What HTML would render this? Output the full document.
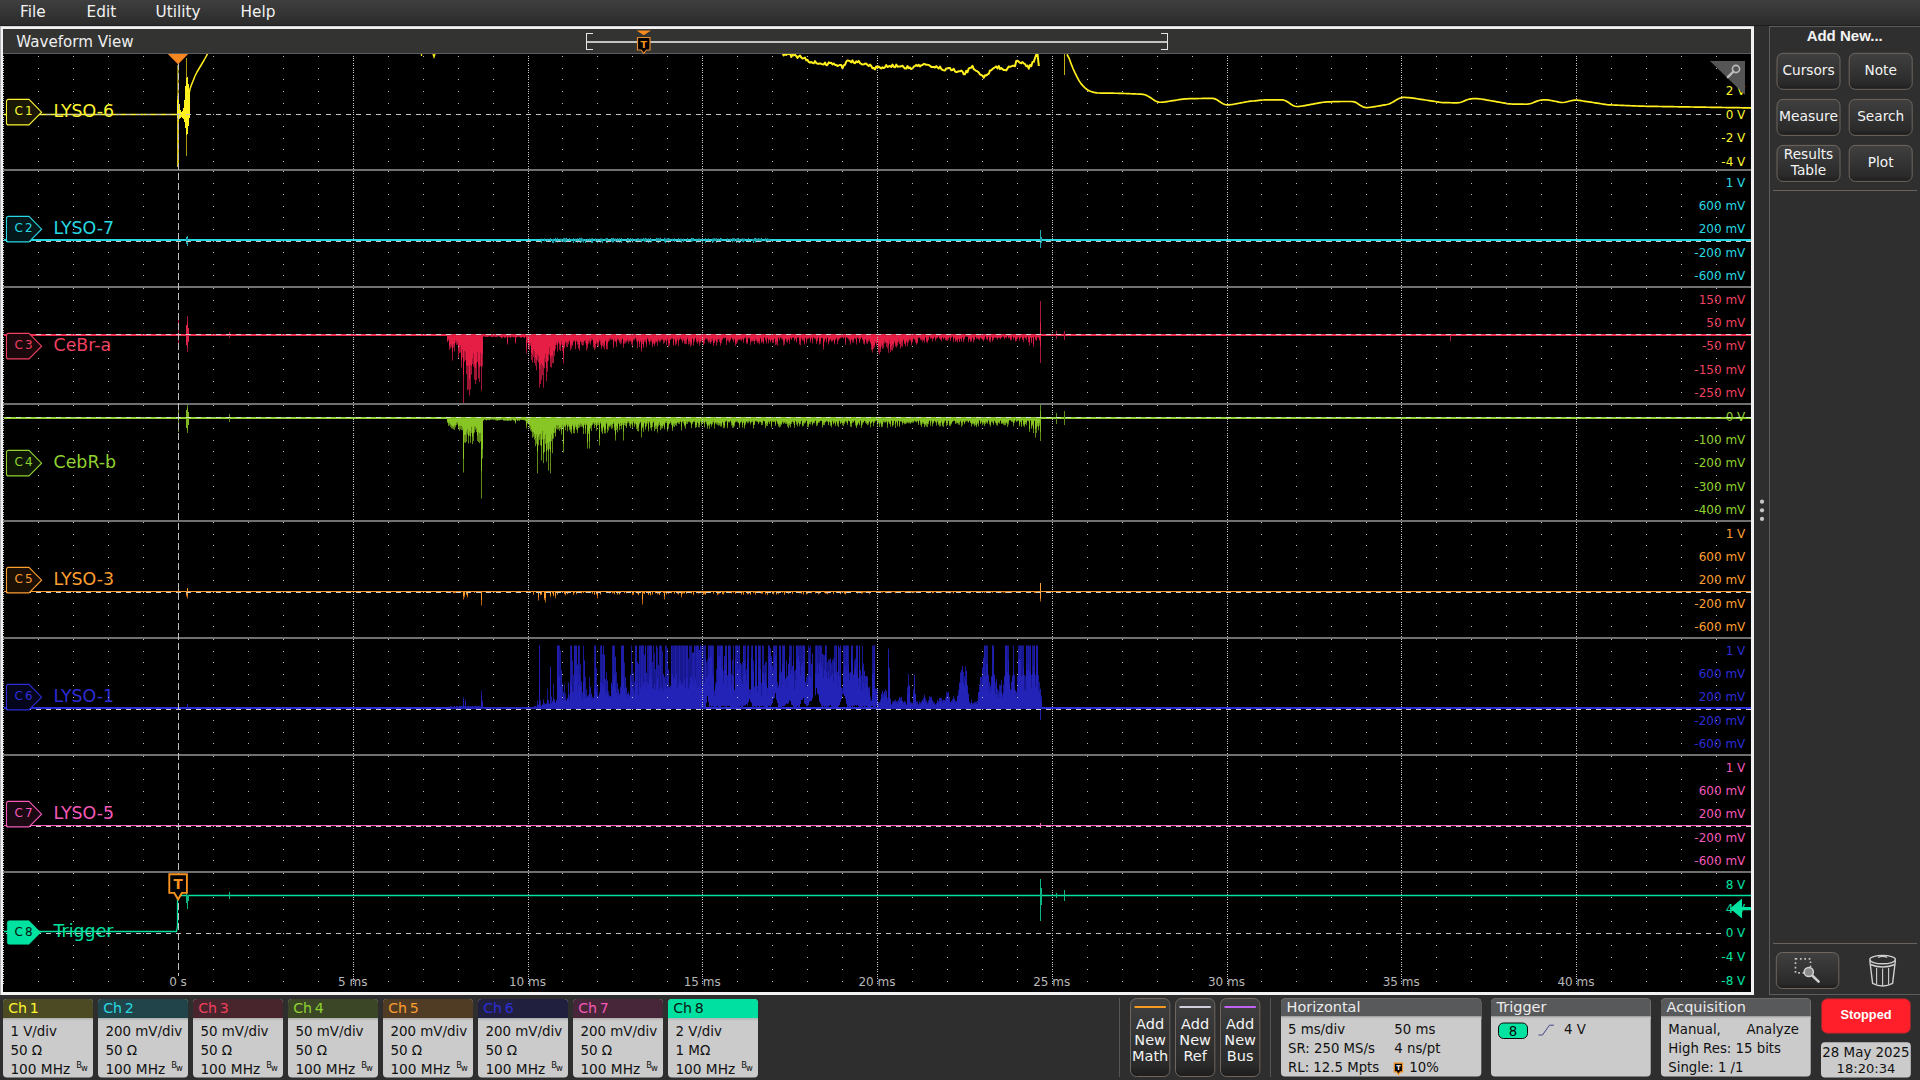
<!DOCTYPE html>
<html lang="en"><head><meta charset="utf-8"><title>Waveform View</title>
<style>html,body{margin:0;padding:0;background:#2e2e2e;overflow:hidden}svg{display:block}text{font-family:'DejaVu Sans','Liberation Sans',sans-serif;white-space:pre}</style>
</head><body>
<svg width="1920" height="1080" viewBox="0 0 1920 1080">
<defs>
<linearGradient id="gm" x1="0" y1="0" x2="0" y2="1"><stop offset="0" stop-color="#3f3f3f"/><stop offset="1" stop-color="#2b2b2b"/></linearGradient>
<linearGradient id="gb" x1="0" y1="0" x2="0" y2="1"><stop offset="0" stop-color="#404040"/><stop offset="0.85" stop-color="#2a2a2a"/><stop offset="1" stop-color="#1c1c1c"/></linearGradient>
<linearGradient id="gh" x1="0" y1="0" x2="0" y2="1"><stop offset="0" stop-color="#b4b4b4"/><stop offset="1" stop-color="#cbcbcb"/></linearGradient>
<path id="dr" d="M38 .5h1m34 0h1m34 0h1m34 0h1m69 0h1m34 0h1m34 0h1m34 0h1m69 0h1m34 0h1m34 0h1m34 0h1m68 0h1m34 0h1m34 0h1m34 0h1m69 0h1m34 0h1m34 0h1m34 0h1m69 0h1m34 0h1m34 0h1m34 0h1m69 0h1m34 0h1m34 0h1m34 0h1m68 0h1m34 0h1m34 0h1m34 0h1m69 0h1m34 0h1m34 0h1m34 0h1m69 0h1m34 0h1m34 0h1m34 0h1" stroke="#b9b9b9" stroke-width="1" fill="none" shape-rendering="crispEdges"/>
<clipPath id="cg"><rect x="3" y="54" width="1748" height="938"/></clipPath>
</defs>
<rect width="1920" height="1080" fill="#2e2e2e"/>
<rect width="1920" height="25" fill="url(#gm)"/>
<rect y="25" width="1920" height="1" fill="#1e1e1e"/>
<text x="20" y="16.7" font-size="15.3" fill="#f2f2f2">File</text>
<text x="86.5" y="16.7" font-size="15.3" fill="#f2f2f2">Edit</text>
<text x="155.5" y="16.7" font-size="15.3" fill="#f2f2f2">Utility</text>
<text x="240.5" y="16.7" font-size="15.3" fill="#f2f2f2">Help</text>
<rect x="0" y="26" width="1754" height="969" fill="#f2f2f2"/>
<rect x="0" y="26" width="1754" height="1" fill="#d4d4d8"/>
<rect x="0" y="26" width="1" height="969" fill="#b4b5ba"/>
<rect x="3" y="29" width="1748" height="963" fill="#000"/>
<rect x="3" y="29" width="1748" height="24" fill="#333332"/>
<rect x="3" y="53" width="1748" height="1" fill="#5c5d60"/>
<text x="16.3" y="46.8" font-size="15.1" fill="#eeeeee">Waveform View</text>
<g fill="none" stroke="#e4e4e4" stroke-width="1" shape-rendering="crispEdges">
<path d="M593 33.5H586.5V49.5H593"/><path d="M1161 33.5H1167.5V49.5H1161"/>
</g>
<rect x="587" y="41" width="580" height="2" fill="#c2c2c2"/>
<path d="M636.5 30.5h14.5l-7.25 4.8z" fill="#f6891f"/>
<path d="M637.5 37.5h12.5v12.5h-3.6l-2.65 3.6l-2.65-3.6h-3.6z" fill="#000" stroke="#e8892b" stroke-width="1.2"/>
<text x="643.75" y="47.6" font-size="9.5" fill="#f6921f" text-anchor="middle" font-weight="bold">T</text>
<g clip-path="url(#cg)">
<rect x="4" y="825" width="1747" height="1" fill="#f458b8"/>
<path d="M1040.5 823V828" stroke="#f458b8" stroke-width="1" fill="none"/>
<rect x="4" y="239" width="1747" height="2" fill="#27d8e2"/>
<path d="M541.5 238.44V243.08M544.5 238.44V241.54M547.5 238.74V241.61M550.5 238.04V241.31M552.5 239V242.92M553.5 238.74V243.16M555.5 237.85V242.19M557.5 237.87V242.52M560.5 238.57V241.37M561.5 238.92V241.66M563.5 238.19V241.74M564.5 238.02V242.06M565.5 238.42V242.55M566.5 237.83V241.05M569.5 238.05V241.81M571.5 238.94V241.4M573.5 238.09V243.05M575.5 238.57V242.15M577.5 238.1V242.75M579.5 237.87V241.2M580.5 238.27V243.02M581.5 237.89V242.2M582.5 238.62V241.39M583.5 238.82V242.52M585.5 238.94V243.17M587.5 238.72V242.31M589.5 238.49V241.12M591.5 238.41V242.84M592.5 238.12V243.09M595.5 238.48V241.33M597.5 238.46V243.2M600.5 238.41V242.6M601.5 238.65V241.89M602.5 238.55V243.17M605.5 238.59V241.2M606.5 238.06V242.91M607.5 238.06V242.7M611.5 238.15V241.62M612.5 238.08V242.52M613.5 237.87V242.43M615.5 238.34V241.55M617.5 238.02V242.42M619.5 238.23V242.62M621.5 237.99V242.91M627.5 238V243.06M628.5 238.17V242.58M630.5 238.06V242.28M632.5 238.25V242.7M635.5 238.81V241.97M637.5 238.18V242.39M638.5 238.43V241.5M639.5 238.84V241.7M640.5 238.77V241.08M641.5 238.54V242.35M643.5 237.92V241M644.5 238.67V241.9M645.5 238V241.82M646.5 238.26V241.21M648.5 238.3V243.11M650.5 238.02V242.41M651.5 238.83V242.31M656.5 237.93V241M657.5 238.32V242.35M658.5 238.24V242.96M659.5 238.48V241.5M660.5 237.83V241.84M664.5 237.82V242.09M665.5 238.62V243.17M666.5 238.66V242.05M667.5 238.25V241.98M668.5 238.06V242.82M669.5 238.36V241.6M672.5 238.68V241.34M674.5 238.27V242.04M678.5 238.09V241.66M680.5 238.64V242.17M681.5 238.57V242.64M683.5 238.7V242M687.5 238.07V241.94M691.5 237.91V241.85M692.5 237.98V241.43M693.5 238V241.15M696.5 238.66V242.72M698.5 238.43V242.21M699.5 238.6V241.34M702.5 238.72V242.8M705.5 238.13V243.15M708.5 237.99V241.48M712.5 238.65V243.02M713.5 238.27V241.91M714.5 238.25V241.1M715.5 238.54V241.16M716.5 238.31V242.63M718.5 238.48V241.69M720.5 237.87V241.82M721.5 238.16V241.33M727.5 238.34V241.56M730.5 238.72V241.82M732.5 238.14V242.44M733.5 238.2V241.2M734.5 238.29V241.52M736.5 238.61V242.75M737.5 238.13V241.12M738.5 237.86V242.5M739.5 238.86V243.14M742.5 238.25V241.78M743.5 238.6V242.35M744.5 238.54V241.3M748.5 237.98V242.14M752.5 238.88V241.07M753.5 238.95V242.96M754.5 238.09V241M755.5 237.93V242.36M756.5 238.44V241.22M757.5 238.81V241.82M758.5 237.94V241.33M759.5 238.67V241.36M760.5 238.72V242.06M761.5 237.89V241.81M765.5 237.87V241.26M767.5 238.19V242.6M768.5 238.76V241.05M769.5 238.91V241.88M178.5 236V247M187.5 236V246M186.5 237V244M1040.5 230V248M1041.5 237V243" stroke="#1fa9b4" stroke-width="1" fill="none"/>
<rect x="4" y="591" width="1747" height="1" fill="#fd9e30"/>
<path d="M448.5 591.5V592.37M449.5 591.5V593.03M450.5 591.5V592.27M453.5 591.5V593.46M454.5 591.5V593.11M455.5 591.5V592.73M457.5 591.5V592.09M461.5 591.5V592.28M462.5 591.5V592.05M463.5 591.5V599.5M464.5 591.5V597.35M466.5 591.5V595.11M467.5 591.5V597.5M471.5 591.5V592.01M474.5 591.5V592.85M476.5 591.5V592.57M477.5 591.5V592.11M478.5 591.5V593.1M479.5 591.5V592.13M480.5 591.5V592.08M482.5 591.5V592.05M483.5 591.5V591.86M485.5 591.5V592.28M490.5 591.5V592.34M494.5 591.5V592.33M496.5 591.5V592.22M497.5 591.5V592.29M499.5 591.5V592.38M501.5 591.5V592.02M505.5 591.5V592.1M507.5 591.5V592.45M508.5 591.5V591.94M510.5 591.5V592.03M515.5 591.5V592.34M516.5 591.5V592.48M520.5 591.5V591.87M521.5 591.5V592.13M523.5 591.5V591.96M528.5 591.5V591.82M530.5 591.5V591.84M533.5 591.5V594.79M538.5 591.5V600.5M540.5 591.5V595.38M541.5 591.5V595.03M544.5 591.5V600.14M550.5 591.5V596.77M552.5 591.5V593.7M553.5 591.5V596.33M555.5 591.5V598.23M557.5 591.5V594.64M564.5 591.5V593.86M565.5 591.5V595.41M566.5 591.5V592.5M567.5 591.5V594.3M570.5 591.5V592.71M573.5 591.5V595.1M574.5 591.5V593.12M576.5 591.5V594.23M577.5 591.5V592.61M581.5 591.5V593.58M583.5 591.5V593.15M585.5 591.5V592.55M588.5 591.5V592.91M592.5 591.5V593.76M594.5 591.5V594.97M596.5 591.5V594.44M598.5 591.5V592.92M599.5 591.5V592.81M600.5 591.5V594.65M608.5 591.5V592.7M609.5 591.5V593.42M612.5 591.5V593.51M613.5 591.5V592.73M614.5 591.5V594.4M617.5 591.5V594.66M618.5 591.5V592.73M619.5 591.5V594.58M620.5 591.5V593.18M624.5 591.5V593.31M626.5 591.5V593.56M628.5 591.5V593.13M632.5 591.5V595.26M633.5 591.5V594.83M635.5 591.5V592.52M637.5 591.5V593.86M638.5 591.5V595.41M640.5 591.5V593.15M643.5 591.5V593.48M644.5 591.5V594.1M647.5 591.5V592.53M648.5 591.5V595.05M650.5 591.5V595.5M652.5 591.5V594.73M655.5 591.5V593.56M657.5 591.5V594.34M658.5 591.5V593.67M659.5 591.5V595.13M660.5 591.5V592.52M663.5 591.5V593.03M665.5 591.5V592.9M666.5 591.5V594.64M668.5 591.5V593.86M670.5 591.5V592.71M671.5 591.5V593.41M674.5 591.5V594.02M677.5 591.5V593.75M678.5 591.5V594.7M682.5 591.5V593.81M683.5 591.5V593.34M684.5 591.5V593.65M686.5 591.5V593.9M690.5 591.5V592.85M691.5 591.5V593.65M693.5 591.5V595.23M696.5 591.5V593.35M698.5 591.5V593.66M699.5 591.5V593.33M701.5 591.5V593.14M703.5 591.5V594.88M704.5 591.5V594.2M705.5 591.5V595.03M707.5 591.5V592.76M710.5 591.5V592.55M713.5 591.5V594.04M717.5 591.5V595.22M718.5 591.5V594.33M719.5 591.5V593.62M722.5 591.5V594.18M723.5 591.5V594.53M724.5 591.5V592.47M728.5 591.5V592.92M730.5 591.5V592.61M731.5 591.5V593.48M733.5 591.5V592.72M735.5 591.5V593.91M736.5 591.5V593.03M741.5 591.5V594.55M742.5 591.5V592.63M743.5 591.5V594.88M747.5 591.5V594.47M748.5 591.5V594.04M750.5 591.5V595.11M753.5 591.5V593.37M754.5 591.5V592.52M755.5 591.5V594.75M756.5 591.5V592.77M760.5 591.5V593.37M761.5 591.5V593.79M762.5 591.5V593.63M765.5 591.5V594.38M767.5 591.5V595.06M768.5 591.5V592.97M770.5 591.5V592.81M772.5 591.5V593.95M773.5 591.5V594.48M774.5 591.5V592.47M776.5 591.5V594.79M778.5 591.5V594.25M782.5 591.5V592.77M784.5 591.5V595M785.5 591.5V592.52M788.5 591.5V594.07M790.5 591.5V593.12M792.5 591.5V594.24M798.5 591.5V593.04M799.5 591.5V593.26M801.5 591.5V593.89M803.5 591.5V594.72M806.5 591.5V594.39M807.5 591.5V594.08M811.5 591.5V593.42M815.5 591.5V593.51M816.5 591.5V592.7M818.5 591.5V594.31M819.5 591.5V593.79M820.5 591.5V592.33M824.5 591.5V592.91M825.5 591.5V593.63M826.5 591.5V593.87M827.5 591.5V594.29M828.5 591.5V592.33M829.5 591.5V593.26M833.5 591.5V594.14M840.5 591.5V594.35M841.5 591.5V592.38M842.5 591.5V593.01M843.5 591.5V592.29M844.5 591.5V593.91M845.5 591.5V594.52M847.5 591.5V593.07M848.5 591.5V592.31M857.5 591.5V593.67M860.5 591.5V592.58M861.5 591.5V593.71M862.5 591.5V593.34M863.5 591.5V592.4M864.5 591.5V592.48M865.5 591.5V592.49M866.5 591.5V592.26M869.5 591.5V594.3M870.5 591.5V592.26M879.5 591.5V592.54M881.5 591.5V592.35M882.5 591.5V592.71M885.5 591.5V593.03M886.5 591.5V593.25M887.5 591.5V592.94M889.5 591.5V592.88M891.5 591.5V592.67M892.5 591.5V592.16M893.5 591.5V592.06M894.5 591.5V592.34M895.5 591.5V593.38M896.5 591.5V592.42M897.5 591.5V592.41M900.5 591.5V593.26M904.5 591.5V592.25M905.5 591.5V593.19M906.5 591.5V592.66M911.5 591.5V592.54M912.5 591.5V593.28M913.5 591.5V592.82M914.5 591.5V592.57M915.5 591.5V592.1M917.5 591.5V592.07M918.5 591.5V592.91M920.5 591.5V592.4M926.5 591.5V592.61M928.5 591.5V593.3M932.5 591.5V593.25M933.5 591.5V593.06M935.5 591.5V592.18M937.5 591.5V592.29M938.5 591.5V592.83M939.5 591.5V592.03M941.5 591.5V592.65M945.5 591.5V592.41M946.5 591.5V593.38M948.5 591.5V592.69M949.5 591.5V593.48M950.5 591.5V592.58M951.5 591.5V592.21M952.5 591.5V592.28M953.5 591.5V593.49M957.5 591.5V592.18M958.5 591.5V592.19M960.5 591.5V592.36M966.5 591.5V592.77M967.5 591.5V592.3M968.5 591.5V592.07M969.5 591.5V593.42M973.5 591.5V592.49M977.5 591.5V592.15M979.5 591.5V592M980.5 591.5V592.22M982.5 591.5V593.03M984.5 591.5V592.8M990.5 591.5V592.2M992.5 591.5V593.05M996.5 591.5V592.75M998.5 591.5V592.32M1001.5 591.5V592.57M1002.5 591.5V592.1M1003.5 591.5V592.65M1004.5 591.5V592.31M1005.5 591.5V593.34M1006.5 591.5V592.97M1007.5 591.5V592.26M1009.5 591.5V592.29M1011.5 591.5V592.92M1017.5 591.5V592.66M1018.5 591.5V592.95M1026.5 591.5V592.84M1027.5 591.5V593.07M1034.5 591.5V592.76M1035.5 591.5V593M1036.5 591.5V593.11M1040.5 591.5V601.5M481.5 591.5V605.5M545.5 591.5V602.5M597.5 591.5V598.5M642.5 591.5V604.5M664.5 591.5V599.5M681.5 591.5V597.5M178.5 591.5V597.5M187.5 591.5V598.5M186.5 591.5V596.5" stroke="#b8650f" stroke-width="1" fill="none"/>
<path d="M448.5 591.5V592.08M449.5 591.5V592.62M450.5 591.5V592.05M453.5 591.5V592.58M454.5 591.5V592.55M455.5 591.5V592.48M457.5 591.5V591.83M461.5 591.5V591.94M462.5 591.5V591.84M463.5 591.5V596M464.5 591.5V594.98M466.5 591.5V593.56M467.5 591.5V595.61M471.5 591.5V591.85M474.5 591.5V592.49M476.5 591.5V592.31M477.5 591.5V591.88M478.5 591.5V592.71M479.5 591.5V591.86M480.5 591.5V591.88M482.5 591.5V591.9M485.5 591.5V592.04M490.5 591.5V592.1M494.5 591.5V592.04M496.5 591.5V591.95M497.5 591.5V592.05M499.5 591.5V592.19M501.5 591.5V591.83M505.5 591.5V591.86M507.5 591.5V592.21M508.5 591.5V591.84M510.5 591.5V591.89M515.5 591.5V592.05M516.5 591.5V592.05M521.5 591.5V591.9M533.5 591.5V593.57M538.5 591.5V597.6M540.5 591.5V593.94M541.5 591.5V593.78M544.5 591.5V598.01M550.5 591.5V595.29M552.5 591.5V592.76M553.5 591.5V595.08M555.5 591.5V595.66M557.5 591.5V593.75M564.5 591.5V593.33M565.5 591.5V594.18M566.5 591.5V592.15M567.5 591.5V593.67M570.5 591.5V592.37M573.5 591.5V593.67M574.5 591.5V592.64M576.5 591.5V593.53M577.5 591.5V592.27M581.5 591.5V592.92M583.5 591.5V592.66M585.5 591.5V592.11M588.5 591.5V592.48M592.5 591.5V593.21M594.5 591.5V593.97M596.5 591.5V593.74M598.5 591.5V592.34M599.5 591.5V592.42M600.5 591.5V593.81M608.5 591.5V592.18M609.5 591.5V592.78M612.5 591.5V592.88M613.5 591.5V592.36M614.5 591.5V593.45M617.5 591.5V593.81M618.5 591.5V592.32M619.5 591.5V593.9M620.5 591.5V592.63M624.5 591.5V592.88M626.5 591.5V592.76M628.5 591.5V592.43M632.5 591.5V593.66M633.5 591.5V593.34M635.5 591.5V592.13M637.5 591.5V592.83M638.5 591.5V594.08M640.5 591.5V592.8M643.5 591.5V592.97M644.5 591.5V593.52M647.5 591.5V592.27M648.5 591.5V594.19M650.5 591.5V594.45M652.5 591.5V593.62M655.5 591.5V592.77M657.5 591.5V593.15M658.5 591.5V592.74M659.5 591.5V594.3M660.5 591.5V592.28M663.5 591.5V592.69M665.5 591.5V592.42M666.5 591.5V593.52M668.5 591.5V593.38M670.5 591.5V592.36M671.5 591.5V592.78M674.5 591.5V593.05M677.5 591.5V593.13M678.5 591.5V593.59M682.5 591.5V592.79M683.5 591.5V592.52M684.5 591.5V593.04M686.5 591.5V593.25M690.5 591.5V592.56M691.5 591.5V593.08M693.5 591.5V593.83M696.5 591.5V592.75M698.5 591.5V592.72M699.5 591.5V592.57M701.5 591.5V592.72M703.5 591.5V593.89M704.5 591.5V593.15M705.5 591.5V593.83M707.5 591.5V592.21M710.5 591.5V592.3M713.5 591.5V592.97M717.5 591.5V593.65M718.5 591.5V593.12M719.5 591.5V593.01M722.5 591.5V593.54M723.5 591.5V593.36M724.5 591.5V592.21M728.5 591.5V592.37M730.5 591.5V592.21M731.5 591.5V592.9M733.5 591.5V592.32M735.5 591.5V593.37M736.5 591.5V592.53M741.5 591.5V593.81M742.5 591.5V592.2M743.5 591.5V593.58M747.5 591.5V593.38M748.5 591.5V593.43M750.5 591.5V593.83M753.5 591.5V592.68M754.5 591.5V592.25M755.5 591.5V593.34M756.5 591.5V592.5M760.5 591.5V592.63M761.5 591.5V592.92M762.5 591.5V593.17M765.5 591.5V593.17M767.5 591.5V593.94M768.5 591.5V592.51M770.5 591.5V592.39M772.5 591.5V593.41M773.5 591.5V593.53M774.5 591.5V592.26M776.5 591.5V593.78M778.5 591.5V593.19M782.5 591.5V592.42M784.5 591.5V593.54M785.5 591.5V592.18M788.5 591.5V592.98M790.5 591.5V592.41M792.5 591.5V593.24M798.5 591.5V592.69M799.5 591.5V592.65M801.5 591.5V593.27M803.5 591.5V593.52M806.5 591.5V593.58M807.5 591.5V593.25M811.5 591.5V592.55M815.5 591.5V592.84M816.5 591.5V592.45M818.5 591.5V593.5M819.5 591.5V592.89M820.5 591.5V592.1M824.5 591.5V592.54M825.5 591.5V593.08M826.5 591.5V592.84M827.5 591.5V593.14M828.5 591.5V592.11M829.5 591.5V592.66M833.5 591.5V593.46M840.5 591.5V593.77M841.5 591.5V592.06M842.5 591.5V592.36M843.5 591.5V592.02M844.5 591.5V593.06M845.5 591.5V593.83M847.5 591.5V592.54M848.5 591.5V592.04M857.5 591.5V593.05M860.5 591.5V592.18M861.5 591.5V593.14M862.5 591.5V592.9M863.5 591.5V592.13M864.5 591.5V592.11M865.5 591.5V592.15M866.5 591.5V592.02M869.5 591.5V593.1M870.5 591.5V591.93M879.5 591.5V592.19M881.5 591.5V592.14M882.5 591.5V592.23M885.5 591.5V592.5M886.5 591.5V592.8M887.5 591.5V592.34M889.5 591.5V592.57M891.5 591.5V592.28M892.5 591.5V591.91M893.5 591.5V591.9M894.5 591.5V591.98M895.5 591.5V592.67M896.5 591.5V592.22M897.5 591.5V592.05M900.5 591.5V592.61M904.5 591.5V591.97M905.5 591.5V592.64M906.5 591.5V592.39M911.5 591.5V592.11M912.5 591.5V592.62M913.5 591.5V592.42M914.5 591.5V592.28M915.5 591.5V591.95M917.5 591.5V591.91M918.5 591.5V592.28M920.5 591.5V592.15M926.5 591.5V592.2M928.5 591.5V592.65M932.5 591.5V592.9M933.5 591.5V592.64M935.5 591.5V591.95M937.5 591.5V592.06M938.5 591.5V592.39M939.5 591.5V591.9M941.5 591.5V592.3M945.5 591.5V592.14M946.5 591.5V592.56M948.5 591.5V592.17M949.5 591.5V592.98M950.5 591.5V592.11M951.5 591.5V592.06M952.5 591.5V591.94M953.5 591.5V592.96M957.5 591.5V591.92M958.5 591.5V592M960.5 591.5V592.16M966.5 591.5V592.29M967.5 591.5V592.03M968.5 591.5V591.85M969.5 591.5V592.79M973.5 591.5V592.12M977.5 591.5V591.86M979.5 591.5V591.81M980.5 591.5V592.02M982.5 591.5V592.42M984.5 591.5V592.44M990.5 591.5V591.97M992.5 591.5V592.49M996.5 591.5V592.38M998.5 591.5V592.05M1001.5 591.5V592.24M1002.5 591.5V591.97M1003.5 591.5V592.22M1004.5 591.5V591.98M1005.5 591.5V592.55M1006.5 591.5V592.54M1007.5 591.5V591.97M1009.5 591.5V592.03M1011.5 591.5V592.54M1017.5 591.5V592.33M1018.5 591.5V592.43M1026.5 591.5V592.44M1027.5 591.5V592.45M1034.5 591.5V592.5M1035.5 591.5V592.68M1036.5 591.5V592.65M1040.5 591.5V598.54M481.5 591.5V599.9M545.5 591.5V598.1M597.5 591.5V595.7M642.5 591.5V599.3M664.5 591.5V596.3M681.5 591.5V595.1M178.5 591.5V595.1M187.5 591.5V595.7M186.5 591.5V594.5" stroke="#fd9e30" stroke-width="1" fill="none"/>
<path d="M1040.5 583V592M187.5 588V592M178.5 588V592" stroke="#fd9e30" stroke-width="1" fill="none"/>
<rect x="4" y="334" width="1747" height="2" fill="#ea2a4e"/>
<path d="M447.5 335.5V342.2M448.5 335.5V340.59M449.5 335.5V349.88M450.5 335.5V348.32M451.5 335.5V347.24M452.5 335.5V360.5M453.5 335.5V347.88M454.5 335.5V351.41M455.5 335.5V343.15M456.5 335.5V344.89M457.5 335.5V344.76M458.5 335.5V358.42M459.5 335.5V353.05M460.5 335.5V352.5M461.5 335.5V367.4M462.5 335.5V357.57M463.5 335.5V403.5M464.5 335.5V361.63M465.5 335.5V360.13M466.5 335.5V374.06M467.5 335.5V390.26M468.5 335.5V389.5M469.5 335.5V395.39M470.5 335.5V389.46M471.5 335.5V374.59M472.5 335.5V364.05M473.5 335.5V366.82M474.5 335.5V379.5M475.5 335.5V384.23M476.5 335.5V380.28M477.5 335.5V361.94M478.5 335.5V378.41M479.5 335.5V382.03M480.5 335.5V366.28M481.5 335.5V390.5M482.5 335.5V366.39M483.5 335.5V336.65M484.5 335.5V336.64M485.5 335.5V337.09M486.5 335.5V336.89M487.5 335.5V337.15M488.5 335.5V336.59M489.5 335.5V336.4M490.5 335.5V336.68M491.5 335.5V337.1M492.5 335.5V336.97M493.5 335.5V337.06M494.5 335.5V336.47M495.5 335.5V337.13M496.5 335.5V336.9M497.5 335.5V336.82M498.5 335.5V336.29M499.5 335.5V336.95M500.5 335.5V337.23M501.5 335.5V338.27M502.5 335.5V338.24M503.5 335.5V336.87M504.5 335.5V337.89M505.5 335.5V337.83M506.5 335.5V337.01M507.5 335.5V344.5M508.5 335.5V337.29M509.5 335.5V337.42M510.5 335.5V338.23M511.5 335.5V337.02M512.5 335.5V337.12M513.5 335.5V337.44M514.5 335.5V337.39M515.5 335.5V343.5M516.5 335.5V337.59M517.5 335.5V336.98M518.5 335.5V336.8M519.5 335.5V337.06M520.5 335.5V337.74M521.5 335.5V337.74M522.5 335.5V337.01M523.5 335.5V337.57M524.5 335.5V338.15M525.5 335.5V336.91M526.5 335.5V353.5M527.5 335.5V343.06M528.5 335.5V348.23M529.5 335.5V350.33M530.5 335.5V346.12M531.5 335.5V359.95M532.5 335.5V362.84M533.5 335.5V357.15M534.5 335.5V363.02M535.5 335.5V365.6M536.5 335.5V370.15M537.5 335.5V360.81M538.5 335.5V362.74M539.5 335.5V387.5M540.5 335.5V383.97M541.5 335.5V380.22M542.5 335.5V375.22M543.5 335.5V387.81M544.5 335.5V368.3M545.5 335.5V362.15M546.5 335.5V381.15M547.5 335.5V371.73M548.5 335.5V360.74M549.5 335.5V355.15M550.5 335.5V366.89M551.5 335.5V367.61M552.5 335.5V363.15M553.5 335.5V363.08M554.5 335.5V356.22M555.5 335.5V349.45M556.5 335.5V344.81M557.5 335.5V351.44M558.5 335.5V343.16M559.5 335.5V349.77M560.5 335.5V350.89M561.5 335.5V344.61M562.5 335.5V351.22M563.5 335.5V363.5M564.5 335.5V348.25M565.5 335.5V343.29M566.5 335.5V346.65M567.5 335.5V347.02M568.5 335.5V344.39M569.5 335.5V341.98M570.5 335.5V350.5M571.5 335.5V348.62M572.5 335.5V346.04M573.5 335.5V341.91M574.5 335.5V341.27M575.5 335.5V349.27M576.5 335.5V341.68M577.5 335.5V344.77M578.5 335.5V348.5M579.5 335.5V350.81M580.5 335.5V342M581.5 335.5V344.57M582.5 335.5V345.85M583.5 335.5V345.24M584.5 335.5V341.29M585.5 335.5V342.98M586.5 335.5V350.55M587.5 335.5V348.5M588.5 335.5V343.7M589.5 335.5V342.64M590.5 335.5V344.6M591.5 335.5V340.77M592.5 335.5V340.21M593.5 335.5V347.53M594.5 335.5V349.83M595.5 335.5V348.5M596.5 335.5V343.6M597.5 335.5V347.17M598.5 335.5V346.47M599.5 335.5V341.33M600.5 335.5V344.79M601.5 335.5V348.86M602.5 335.5V346.03M603.5 335.5V347.35M604.5 335.5V349.36M605.5 335.5V341.53M606.5 335.5V349.31M607.5 335.5V349.35M608.5 335.5V341.77M609.5 335.5V340.94M610.5 335.5V339.81M611.5 335.5V340.32M612.5 335.5V339.79M613.5 335.5V348.04M614.5 335.5V340.92M615.5 335.5V342.12M616.5 335.5V346.86M617.5 335.5V340.34M618.5 335.5V340.51M619.5 335.5V342.71M620.5 335.5V344.35M621.5 335.5V343.17M622.5 335.5V339.16M623.5 335.5V347.8M624.5 335.5V343.65M625.5 335.5V343.4M626.5 335.5V342.32M627.5 335.5V341.17M628.5 335.5V343.43M629.5 335.5V341.87M630.5 335.5V341.5M631.5 335.5V344.6M632.5 335.5V347.62M633.5 335.5V340.4M634.5 335.5V340.2M635.5 335.5V338.79M636.5 335.5V341.32M637.5 335.5V348.09M638.5 335.5V341.5M639.5 335.5V346.91M640.5 335.5V341.88M641.5 335.5V351.5M642.5 335.5V343.97M643.5 335.5V347.84M644.5 335.5V341.74M645.5 335.5V342.29M646.5 335.5V347.23M647.5 335.5V339.23M648.5 335.5V341.51M649.5 335.5V344.9M650.5 335.5V341.47M651.5 335.5V341.77M652.5 335.5V347.02M653.5 335.5V343.74M654.5 335.5V346.07M655.5 335.5V343.19M656.5 335.5V342.39M657.5 335.5V345.91M658.5 335.5V340.89M659.5 335.5V342.57M660.5 335.5V341.72M661.5 335.5V340.28M662.5 335.5V339.95M663.5 335.5V343.69M664.5 335.5V342.86M665.5 335.5V340.66M666.5 335.5V344.98M667.5 335.5V340.26M668.5 335.5V346.84M669.5 335.5V345.56M670.5 335.5V340.05M671.5 335.5V339.33M672.5 335.5V338.88M673.5 335.5V345.88M674.5 335.5V339.78M675.5 335.5V345.36M676.5 335.5V344.09M677.5 335.5V340.29M678.5 335.5V346.28M679.5 335.5V340.01M680.5 335.5V339.01M681.5 335.5V340.24M682.5 335.5V342.98M683.5 335.5V340.78M684.5 335.5V343.81M685.5 335.5V344.32M686.5 335.5V343.98M687.5 335.5V339.16M688.5 335.5V344.61M689.5 335.5V343.77M690.5 335.5V346.48M691.5 335.5V345.33M692.5 335.5V339.1M693.5 335.5V345.71M694.5 335.5V341.42M695.5 335.5V338.62M696.5 335.5V342.29M697.5 335.5V344.06M698.5 335.5V341.75M699.5 335.5V345.63M700.5 335.5V342.74M701.5 335.5V341.36M702.5 335.5V342.47M703.5 335.5V345.17M704.5 335.5V343.45M705.5 335.5V339.5M706.5 335.5V339.24M707.5 335.5V340.56M708.5 335.5V342.7M709.5 335.5V342.26M710.5 335.5V344.01M711.5 335.5V342M712.5 335.5V340.54M713.5 335.5V345.78M714.5 335.5V343.05M715.5 335.5V340.68M716.5 335.5V345.71M717.5 335.5V342.58M718.5 335.5V339.47M719.5 335.5V342.02M720.5 335.5V345.67M721.5 335.5V343.3M722.5 335.5V339.97M723.5 335.5V338.17M724.5 335.5V338.75M725.5 335.5V337.95M726.5 335.5V344.94M727.5 335.5V340.6M728.5 335.5V341.56M729.5 335.5V343.1M730.5 335.5V340.39M731.5 335.5V338.37M732.5 335.5V339.89M733.5 335.5V342.22M734.5 335.5V339.73M735.5 335.5V345.67M736.5 335.5V343.98M737.5 335.5V342.62M738.5 335.5V340.19M739.5 335.5V339.96M740.5 335.5V340.01M741.5 335.5V341.1M742.5 335.5V339.32M743.5 335.5V342.91M744.5 335.5V338.77M745.5 335.5V337.84M746.5 335.5V343.47M747.5 335.5V343.86M748.5 335.5V338.48M749.5 335.5V338.72M750.5 335.5V344.87M751.5 335.5V341.86M752.5 335.5V341.73M753.5 335.5V341.17M754.5 335.5V344.37M755.5 335.5V340.78M756.5 335.5V340.86M757.5 335.5V343.11M758.5 335.5V343.05M759.5 335.5V344.43M760.5 335.5V338.73M761.5 335.5V343.19M762.5 335.5V341.74M763.5 335.5V343.73M764.5 335.5V337.84M765.5 335.5V340.48M766.5 335.5V343.49M767.5 335.5V338.69M768.5 335.5V343.45M769.5 335.5V340.05M770.5 335.5V342.3M771.5 335.5V340.38M772.5 335.5V342.96M773.5 335.5V343.04M774.5 335.5V339.04M775.5 335.5V345.05M776.5 335.5V344.51M777.5 335.5V345.56M778.5 335.5V338.18M779.5 335.5V340.23M780.5 335.5V337.77M781.5 335.5V339.11M782.5 335.5V339.66M783.5 335.5V345.5M784.5 335.5V344.67M785.5 335.5V339.39M786.5 335.5V341.52M787.5 335.5V342.73M788.5 335.5V340.08M789.5 335.5V343.87M790.5 335.5V338.46M791.5 335.5V339.97M792.5 335.5V337.96M793.5 335.5V337.84M794.5 335.5V340.97M795.5 335.5V339.24M796.5 335.5V342.31M797.5 335.5V337.9M798.5 335.5V337.84M799.5 335.5V344.53M800.5 335.5V345.38M801.5 335.5V338.79M802.5 335.5V340.55M803.5 335.5V340.79M804.5 335.5V344.59M805.5 335.5V338.26M806.5 335.5V343.32M807.5 335.5V339.18M808.5 335.5V338.86M809.5 335.5V338.33M810.5 335.5V342.6M811.5 335.5V338.58M812.5 335.5V343.4M813.5 335.5V337.86M814.5 335.5V338.77M815.5 335.5V339.33M816.5 335.5V343.92M817.5 335.5V341.2M818.5 335.5V337.79M819.5 335.5V344.64M820.5 335.5V343.55M821.5 335.5V338.34M822.5 335.5V338.41M823.5 335.5V349.5M824.5 335.5V341.84M825.5 335.5V339.07M826.5 335.5V342.53M827.5 335.5V338.1M828.5 335.5V344.59M829.5 335.5V341.34M830.5 335.5V339.71M831.5 335.5V341.83M832.5 335.5V341.32M833.5 335.5V340.1M834.5 335.5V344.49M835.5 335.5V340.32M836.5 335.5V338.67M837.5 335.5V344.18M838.5 335.5V340.8M839.5 335.5V339.06M840.5 335.5V338.18M841.5 335.5V337.94M842.5 335.5V337.6M843.5 335.5V338.85M844.5 335.5V337.55M845.5 335.5V344.91M846.5 335.5V337.67M847.5 335.5V338.36M848.5 335.5V339.46M849.5 335.5V341.2M850.5 335.5V344.64M851.5 335.5V339.87M852.5 335.5V342.53M853.5 335.5V342.65M854.5 335.5V338.73M855.5 335.5V339.22M856.5 335.5V344.58M857.5 335.5V337.91M858.5 335.5V339.05M859.5 335.5V343.06M860.5 335.5V339.29M861.5 335.5V337.8M862.5 335.5V340.22M863.5 335.5V343.69M864.5 335.5V344.53M865.5 335.5V339.8M866.5 335.5V343.37M867.5 335.5V344.04M868.5 335.5V341.59M869.5 335.5V341.21M870.5 335.5V343.5M871.5 335.5V349.92M872.5 335.5V352.5M873.5 335.5V349.01M874.5 335.5V347.38M875.5 335.5V342.97M876.5 335.5V345.9M877.5 335.5V343.54M878.5 335.5V352.5M879.5 335.5V354.49M880.5 335.5V351.95M881.5 335.5V346.55M882.5 335.5V348.76M883.5 335.5V348.1M884.5 335.5V343.56M885.5 335.5V343.06M886.5 335.5V346.82M887.5 335.5V348.41M888.5 335.5V352.84M889.5 335.5V343.75M890.5 335.5V352.2M891.5 335.5V350.26M892.5 335.5V350.57M893.5 335.5V347.79M894.5 335.5V342.65M895.5 335.5V346.56M896.5 335.5V347.57M897.5 335.5V345.77M898.5 335.5V342.53M899.5 335.5V344.11M900.5 335.5V348.54M901.5 335.5V346.37M902.5 335.5V346.91M903.5 335.5V340.4M904.5 335.5V344.07M905.5 335.5V346.27M906.5 335.5V342.38M907.5 335.5V346.41M908.5 335.5V342.99M909.5 335.5V340.48M910.5 335.5V340.8M911.5 335.5V345.22M912.5 335.5V342.22M913.5 335.5V338.93M914.5 335.5V339.81M915.5 335.5V342.57M916.5 335.5V344.69M917.5 335.5V343.33M918.5 335.5V338.01M919.5 335.5V337.74M920.5 335.5V340.13M921.5 335.5V340.17M922.5 335.5V341.85M923.5 335.5V340.63M924.5 335.5V342.78M925.5 335.5V337.61M926.5 335.5V342.06M927.5 335.5V342.93M928.5 335.5V340.36M929.5 335.5V336.79M930.5 335.5V338.73M931.5 335.5V338.51M932.5 335.5V341.65M933.5 335.5V338.96M934.5 335.5V337.31M935.5 335.5V341.09M936.5 335.5V338.68M937.5 335.5V338.07M938.5 335.5V336.92M939.5 335.5V338.59M940.5 335.5V339.57M941.5 335.5V341.35M942.5 335.5V337.71M943.5 335.5V339.4M944.5 335.5V338.17M945.5 335.5V340.18M946.5 335.5V340.78M947.5 335.5V341M948.5 335.5V339.68M949.5 335.5V337.49M950.5 335.5V341M951.5 335.5V337.73M952.5 335.5V336.81M953.5 335.5V342.21M954.5 335.5V338.4M955.5 335.5V341.98M956.5 335.5V340.76M957.5 335.5V342.3M958.5 335.5V339.3M959.5 335.5V342.25M960.5 335.5V339.05M961.5 335.5V341.57M962.5 335.5V337.66M963.5 335.5V342.39M964.5 335.5V339.41M965.5 335.5V336.75M966.5 335.5V336.81M967.5 335.5V336.87M968.5 335.5V342.21M969.5 335.5V339.11M970.5 335.5V341.83M971.5 335.5V341.45M972.5 335.5V337.83M973.5 335.5V342.4M974.5 335.5V340.47M975.5 335.5V336.81M976.5 335.5V338.9M977.5 335.5V338.68M978.5 335.5V339.49M979.5 335.5V340.25M980.5 335.5V337.95M981.5 335.5V338.91M982.5 335.5V339.82M983.5 335.5V341.42M984.5 335.5V339.42M985.5 335.5V336.43M986.5 335.5V339.48M987.5 335.5V340.42M988.5 335.5V337.17M989.5 335.5V341.71M990.5 335.5V342.27M991.5 335.5V337.39M992.5 335.5V341.55M993.5 335.5V339.75M994.5 335.5V337.76M995.5 335.5V337.69M996.5 335.5V338.25M997.5 335.5V339.77M998.5 335.5V337.98M999.5 335.5V338.26M1000.5 335.5V339.45M1001.5 335.5V337.96M1002.5 335.5V336.75M1003.5 335.5V336.94M1004.5 335.5V339.36M1005.5 335.5V337.48M1006.5 335.5V338.31M1007.5 335.5V336.37M1008.5 335.5V338.45M1009.5 335.5V337.55M1010.5 335.5V340.53M1011.5 335.5V340.14M1012.5 335.5V336.78M1013.5 335.5V339.48M1014.5 335.5V337.76M1015.5 335.5V341.55M1016.5 335.5V341.03M1017.5 335.5V338.98M1018.5 335.5V337.34M1019.5 335.5V340.72M1020.5 335.5V338.36M1021.5 335.5V337.28M1022.5 335.5V339.85M1023.5 335.5V342.39M1024.5 335.5V337.64M1025.5 335.5V338.71M1026.5 335.5V340.18M1027.5 335.5V336.82M1028.5 335.5V342.23M1029.5 335.5V345.45M1030.5 335.5V337.99M1031.5 335.5V343.19M1032.5 335.5V337.89M1033.5 335.5V346.95M1034.5 335.5V337M1035.5 335.5V339.6M1036.5 335.5V341.03M1037.5 335.5V337.42M1038.5 335.5V338.04M1039.5 335.5V340.66" stroke="#a01434" stroke-width="1" fill="none"/>
<path d="M447.5 335.5V340.53M448.5 335.5V338.84M449.5 335.5V346.13M450.5 335.5V344.26M451.5 335.5V344.5M452.5 335.5V352.33M453.5 335.5V344.05M454.5 335.5V345.52M455.5 335.5V340.07M456.5 335.5V341.37M457.5 335.5V342.14M458.5 335.5V350.84M459.5 335.5V346.75M460.5 335.5V345.48M461.5 335.5V360.55M462.5 335.5V349.26M463.5 335.5V374.9M464.5 335.5V350.81M465.5 335.5V351.75M466.5 335.5V365.13M467.5 335.5V366.21M468.5 335.5V365.24M469.5 335.5V379.17M470.5 335.5V365.26M471.5 335.5V365.88M472.5 335.5V358.25M473.5 335.5V353.37M474.5 335.5V364.69M475.5 335.5V368.09M476.5 335.5V362.87M477.5 335.5V351.62M478.5 335.5V364.72M479.5 335.5V367.16M480.5 335.5V352.66M481.5 335.5V365.89M482.5 335.5V354.29M483.5 335.5V336.2M484.5 335.5V336.15M485.5 335.5V336.61M486.5 335.5V336.28M487.5 335.5V336.68M488.5 335.5V336.33M489.5 335.5V336.05M490.5 335.5V336.2M491.5 335.5V336.74M492.5 335.5V336.36M493.5 335.5V336.55M494.5 335.5V336.27M495.5 335.5V336.74M496.5 335.5V336.3M497.5 335.5V336.53M498.5 335.5V336M499.5 335.5V336.38M500.5 335.5V336.57M501.5 335.5V337.43M502.5 335.5V337.03M503.5 335.5V336.32M504.5 335.5V337.18M505.5 335.5V337.03M506.5 335.5V336.38M507.5 335.5V342.59M508.5 335.5V336.61M509.5 335.5V336.64M510.5 335.5V337.03M511.5 335.5V336.58M512.5 335.5V336.51M513.5 335.5V336.8M514.5 335.5V336.99M515.5 335.5V341.76M516.5 335.5V337.06M517.5 335.5V336.47M518.5 335.5V336.44M519.5 335.5V336.37M520.5 335.5V336.93M521.5 335.5V337.24M522.5 335.5V336.71M523.5 335.5V336.97M524.5 335.5V337.36M525.5 335.5V336.57M526.5 335.5V348.72M527.5 335.5V340.28M528.5 335.5V344M529.5 335.5V344.63M530.5 335.5V342.89M531.5 335.5V352.74M532.5 335.5V353.93M533.5 335.5V349.42M534.5 335.5V351.48M535.5 335.5V357.69M536.5 335.5V359.55M537.5 335.5V354.05M538.5 335.5V356.03M539.5 335.5V369.13M540.5 335.5V364.77M541.5 335.5V363.15M542.5 335.5V365.2M543.5 335.5V367.26M544.5 335.5V358.3M545.5 335.5V353.81M546.5 335.5V367.5M547.5 335.5V361.12M548.5 335.5V353.69M549.5 335.5V347.14M550.5 335.5V357.91M551.5 335.5V355.78M552.5 335.5V355.4M553.5 335.5V350.85M554.5 335.5V351.45M555.5 335.5V345.03M556.5 335.5V342.17M557.5 335.5V345.62M558.5 335.5V341.02M559.5 335.5V343.87M560.5 335.5V345.88M561.5 335.5V341.06M562.5 335.5V344.9M563.5 335.5V355.66M564.5 335.5V345.4M565.5 335.5V340.97M566.5 335.5V342.05M567.5 335.5V341.97M568.5 335.5V340.96M569.5 335.5V339.97M570.5 335.5V345.93M571.5 335.5V344.61M572.5 335.5V343.47M573.5 335.5V340.41M574.5 335.5V339.96M575.5 335.5V345.49M576.5 335.5V340.08M577.5 335.5V341.23M578.5 335.5V344.16M579.5 335.5V347.66M580.5 335.5V340.26M581.5 335.5V342.04M582.5 335.5V341.72M583.5 335.5V341.9M584.5 335.5V340.01M585.5 335.5V339.81M586.5 335.5V345.14M587.5 335.5V344.91M588.5 335.5V340.35M589.5 335.5V339.72M590.5 335.5V341.17M591.5 335.5V338.55M592.5 335.5V338.71M593.5 335.5V342.92M594.5 335.5V346.72M595.5 335.5V344.18M596.5 335.5V341.05M597.5 335.5V342.99M598.5 335.5V342.71M599.5 335.5V339.32M600.5 335.5V340.62M601.5 335.5V346.03M602.5 335.5V342.88M603.5 335.5V343.38M604.5 335.5V345.03M605.5 335.5V339.82M606.5 335.5V346.54M607.5 335.5V343.27M608.5 335.5V340.25M609.5 335.5V338.63M610.5 335.5V338.02M611.5 335.5V338.35M612.5 335.5V338.76M613.5 335.5V344.67M614.5 335.5V339.05M615.5 335.5V340.65M616.5 335.5V343.54M617.5 335.5V338.86M618.5 335.5V338.57M619.5 335.5V340.22M620.5 335.5V340.98M621.5 335.5V340.03M622.5 335.5V338.11M623.5 335.5V344.1M624.5 335.5V341.11M625.5 335.5V340.82M626.5 335.5V340.68M627.5 335.5V338.95M628.5 335.5V340.45M629.5 335.5V340M630.5 335.5V339.61M631.5 335.5V341.06M632.5 335.5V342.61M633.5 335.5V338.8M634.5 335.5V338.29M635.5 335.5V337.43M636.5 335.5V338.99M637.5 335.5V343.08M638.5 335.5V340.3M639.5 335.5V343.67M640.5 335.5V340.14M641.5 335.5V348.26M642.5 335.5V340.29M643.5 335.5V344.7M644.5 335.5V339.92M645.5 335.5V339.36M646.5 335.5V344.03M647.5 335.5V337.65M648.5 335.5V339.5M649.5 335.5V342.51M650.5 335.5V339.51M651.5 335.5V339.46M652.5 335.5V344.14M653.5 335.5V341.72M654.5 335.5V343.8M655.5 335.5V340.46M656.5 335.5V340.77M657.5 335.5V341.87M658.5 335.5V338.71M659.5 335.5V339.79M660.5 335.5V339.97M661.5 335.5V338.78M662.5 335.5V338.54M663.5 335.5V340.55M664.5 335.5V340.23M665.5 335.5V339.35M666.5 335.5V341.42M667.5 335.5V338.27M668.5 335.5V342.91M669.5 335.5V343.18M670.5 335.5V338.57M671.5 335.5V337.99M672.5 335.5V337.87M673.5 335.5V343.7M674.5 335.5V338.67M675.5 335.5V341.96M676.5 335.5V341.73M677.5 335.5V338.32M678.5 335.5V341.53M679.5 335.5V338.48M680.5 335.5V337.52M681.5 335.5V338.97M682.5 335.5V340.57M683.5 335.5V338.46M684.5 335.5V340.28M685.5 335.5V341.47M686.5 335.5V340.48M687.5 335.5V337.64M688.5 335.5V341.2M689.5 335.5V340.66M690.5 335.5V341.9M691.5 335.5V343.36M692.5 335.5V337.88M693.5 335.5V342.57M694.5 335.5V339.49M695.5 335.5V337.39M696.5 335.5V340.56M697.5 335.5V341.51M698.5 335.5V339.28M699.5 335.5V342.4M700.5 335.5V341.28M701.5 335.5V339.39M702.5 335.5V340.18M703.5 335.5V342.71M704.5 335.5V340.26M705.5 335.5V337.9M706.5 335.5V338.32M707.5 335.5V338.32M708.5 335.5V340.73M709.5 335.5V339.49M710.5 335.5V341.84M711.5 335.5V339.08M712.5 335.5V338.36M713.5 335.5V342.91M714.5 335.5V341.3M715.5 335.5V338.86M716.5 335.5V341.5M717.5 335.5V340M718.5 335.5V338.42M719.5 335.5V339.18M720.5 335.5V343.03M721.5 335.5V340.01M722.5 335.5V338.49M723.5 335.5V337.26M724.5 335.5V337.56M725.5 335.5V337.45M726.5 335.5V341.68M727.5 335.5V338.95M728.5 335.5V338.84M729.5 335.5V341.28M730.5 335.5V339.35M731.5 335.5V337.26M732.5 335.5V338.65M733.5 335.5V339.53M734.5 335.5V338.33M735.5 335.5V342.85M736.5 335.5V341.24M737.5 335.5V339.9M738.5 335.5V338.65M739.5 335.5V339.02M740.5 335.5V338.49M741.5 335.5V339.15M742.5 335.5V338.25M743.5 335.5V340.22M744.5 335.5V337.7M745.5 335.5V336.86M746.5 335.5V341.5M747.5 335.5V342.12M748.5 335.5V337.24M749.5 335.5V337.52M750.5 335.5V341.14M751.5 335.5V340.12M752.5 335.5V339.75M753.5 335.5V339.75M754.5 335.5V341.11M755.5 335.5V338.44M756.5 335.5V339.45M757.5 335.5V341.01M758.5 335.5V340.86M759.5 335.5V341.47M760.5 335.5V337.95M761.5 335.5V341.35M762.5 335.5V339.66M763.5 335.5V341.92M764.5 335.5V337.07M765.5 335.5V338.67M766.5 335.5V341.05M767.5 335.5V337.56M768.5 335.5V340.72M769.5 335.5V338.65M770.5 335.5V340.68M771.5 335.5V338.8M772.5 335.5V340.35M773.5 335.5V340.2M774.5 335.5V338.06M775.5 335.5V342.16M776.5 335.5V340.77M777.5 335.5V341.87M778.5 335.5V336.99M779.5 335.5V339.07M780.5 335.5V336.92M781.5 335.5V337.51M782.5 335.5V338.26M783.5 335.5V341.27M784.5 335.5V341.2M785.5 335.5V338.51M786.5 335.5V338.95M787.5 335.5V340.5M788.5 335.5V338.09M789.5 335.5V340.91M790.5 335.5V337.65M791.5 335.5V338.83M792.5 335.5V337.25M793.5 335.5V336.99M794.5 335.5V339.06M795.5 335.5V338.1M796.5 335.5V340.89M797.5 335.5V337.03M798.5 335.5V336.84M799.5 335.5V340.76M800.5 335.5V341.35M801.5 335.5V337.48M802.5 335.5V339.26M803.5 335.5V338.58M804.5 335.5V342.49M805.5 335.5V337.51M806.5 335.5V340.39M807.5 335.5V338.2M808.5 335.5V337.76M809.5 335.5V337.44M810.5 335.5V340.01M811.5 335.5V337.6M812.5 335.5V340.22M813.5 335.5V336.97M814.5 335.5V337.4M815.5 335.5V337.82M816.5 335.5V341.7M817.5 335.5V339.11M818.5 335.5V337.15M819.5 335.5V342.43M820.5 335.5V340.51M821.5 335.5V337.72M822.5 335.5V337.82M823.5 335.5V346.16M824.5 335.5V340.38M825.5 335.5V337.97M826.5 335.5V340.2M827.5 335.5V337.03M828.5 335.5V342.31M829.5 335.5V339.88M830.5 335.5V338.77M831.5 335.5V339.88M832.5 335.5V339.86M833.5 335.5V339.06M834.5 335.5V341.98M835.5 335.5V338.86M836.5 335.5V337.39M837.5 335.5V340.77M838.5 335.5V338.83M839.5 335.5V338.15M840.5 335.5V337.62M841.5 335.5V336.86M842.5 335.5V336.74M843.5 335.5V337.95M844.5 335.5V336.63M845.5 335.5V341.75M846.5 335.5V337.04M847.5 335.5V337.39M848.5 335.5V338.23M849.5 335.5V338.7M850.5 335.5V341.84M851.5 335.5V338.72M852.5 335.5V340.15M853.5 335.5V339.76M854.5 335.5V337.44M855.5 335.5V338.23M856.5 335.5V341.56M857.5 335.5V337.19M858.5 335.5V337.53M859.5 335.5V341.1M860.5 335.5V338.46M861.5 335.5V337.27M862.5 335.5V338.92M863.5 335.5V340.39M864.5 335.5V342.25M865.5 335.5V338.92M866.5 335.5V340.82M867.5 335.5V341.27M868.5 335.5V339.06M869.5 335.5V339.36M870.5 335.5V341.8M871.5 335.5V344.59M872.5 335.5V349M873.5 335.5V345.72M874.5 335.5V344.82M875.5 335.5V341.24M876.5 335.5V343.28M877.5 335.5V340.62M878.5 335.5V346.96M879.5 335.5V346.32M880.5 335.5V348.41M881.5 335.5V343.64M882.5 335.5V345.39M883.5 335.5V343.24M884.5 335.5V340.13M885.5 335.5V341.31M886.5 335.5V342.46M887.5 335.5V343.24M888.5 335.5V345.68M889.5 335.5V340.26M890.5 335.5V348.7M891.5 335.5V345.76M892.5 335.5V344.23M893.5 335.5V344.41M894.5 335.5V340.56M895.5 335.5V343.63M896.5 335.5V345.1M897.5 335.5V341.99M898.5 335.5V339.54M899.5 335.5V341.47M900.5 335.5V344.41M901.5 335.5V341.59M902.5 335.5V342.51M903.5 335.5V339.17M904.5 335.5V342.31M905.5 335.5V343.7M906.5 335.5V340.16M907.5 335.5V341.74M908.5 335.5V339.95M909.5 335.5V338.25M910.5 335.5V339.37M911.5 335.5V342.96M912.5 335.5V340.36M913.5 335.5V337.67M914.5 335.5V338.86M915.5 335.5V339.51M916.5 335.5V342.77M917.5 335.5V341.73M918.5 335.5V337.3M919.5 335.5V337.2M920.5 335.5V338.21M921.5 335.5V338.3M922.5 335.5V339.26M923.5 335.5V339.53M924.5 335.5V339.6M925.5 335.5V337.06M926.5 335.5V340.12M927.5 335.5V341.2M928.5 335.5V338.84M929.5 335.5V336.27M930.5 335.5V337.64M931.5 335.5V337.7M932.5 335.5V339.25M933.5 335.5V337.91M934.5 335.5V336.61M935.5 335.5V339.11M936.5 335.5V337.67M937.5 335.5V337.53M938.5 335.5V336.32M939.5 335.5V337.69M940.5 335.5V338.66M941.5 335.5V339.1M942.5 335.5V337M943.5 335.5V338.59M944.5 335.5V337.35M945.5 335.5V338.67M946.5 335.5V339.45M947.5 335.5V338.54M948.5 335.5V338.11M949.5 335.5V336.91M950.5 335.5V338.76M951.5 335.5V336.75M952.5 335.5V336.27M953.5 335.5V339.8M954.5 335.5V337.46M955.5 335.5V339.4M956.5 335.5V339.53M957.5 335.5V340.35M958.5 335.5V338.01M959.5 335.5V340.82M960.5 335.5V338.07M961.5 335.5V339.98M962.5 335.5V337.06M963.5 335.5V339.76M964.5 335.5V338.01M965.5 335.5V336.2M966.5 335.5V336.28M967.5 335.5V336.32M968.5 335.5V339.9M969.5 335.5V338.35M970.5 335.5V340.36M971.5 335.5V339.27M972.5 335.5V337.32M973.5 335.5V339.7M974.5 335.5V338.95M975.5 335.5V336.5M976.5 335.5V338.08M977.5 335.5V337.38M978.5 335.5V338.36M979.5 335.5V338.56M980.5 335.5V337.32M981.5 335.5V337.94M982.5 335.5V338.93M983.5 335.5V339.87M984.5 335.5V337.82M985.5 335.5V336.22M986.5 335.5V338.13M987.5 335.5V338.67M988.5 335.5V336.81M989.5 335.5V339.75M990.5 335.5V339.56M991.5 335.5V336.61M992.5 335.5V340.18M993.5 335.5V338M994.5 335.5V337.1M995.5 335.5V336.99M996.5 335.5V337.28M997.5 335.5V338.23M998.5 335.5V337.28M999.5 335.5V337.1M1000.5 335.5V338.15M1001.5 335.5V337.18M1002.5 335.5V336.25M1003.5 335.5V336.33M1004.5 335.5V338.09M1005.5 335.5V337.02M1006.5 335.5V337.06M1007.5 335.5V336.14M1008.5 335.5V337.51M1009.5 335.5V337.11M1010.5 335.5V338.94M1011.5 335.5V338.32M1012.5 335.5V336.24M1013.5 335.5V337.9M1014.5 335.5V337M1015.5 335.5V340.07M1016.5 335.5V338.93M1017.5 335.5V337.62M1018.5 335.5V336.88M1019.5 335.5V338.61M1020.5 335.5V337.7M1021.5 335.5V336.7M1022.5 335.5V338.21M1023.5 335.5V339.36M1024.5 335.5V336.85M1025.5 335.5V337.39M1026.5 335.5V338.29M1027.5 335.5V336.39M1028.5 335.5V339.61M1029.5 335.5V342.15M1030.5 335.5V337.32M1031.5 335.5V341.1M1032.5 335.5V336.96M1033.5 335.5V344.08M1034.5 335.5V336.53M1035.5 335.5V338.71M1036.5 335.5V339.47M1037.5 335.5V336.84M1038.5 335.5V336.96M1039.5 335.5V339.24" stroke="#e61d44" stroke-width="1" fill="none"/>
<path d="M1040.5 301V363M178.5 318V350M187.5 316V352M229.5 332V338M1056.5 331V339M1064.5 331V340M1450.5 335V341" stroke="#a8183a" stroke-width="1" fill="none"/>
<path d="M1040.5 322V346M186.5 325V345M187.5 322V347M188.5 328V342" stroke="#de2448" stroke-width="1" fill="none"/>
<rect x="4" y="417" width="1747" height="2" fill="#90d22f"/>
<path d="M447.5 418.5V422.82M448.5 418.5V425.97M449.5 418.5V425.39M450.5 418.5V426.83M451.5 418.5V428.45M452.5 418.5V428.52M453.5 418.5V429.36M454.5 418.5V429.98M455.5 418.5V427.43M456.5 418.5V425.22M457.5 418.5V424.45M458.5 418.5V429.41M459.5 418.5V430.67M460.5 418.5V429.3M461.5 418.5V429.95M462.5 418.5V430.24M463.5 418.5V472.5M464.5 418.5V442.51M465.5 418.5V442.89M466.5 418.5V441.65M467.5 418.5V434.4M468.5 418.5V443.43M469.5 418.5V435.75M470.5 418.5V442.8M471.5 418.5V432.97M472.5 418.5V444.09M473.5 418.5V440.97M474.5 418.5V432.64M475.5 418.5V429.72M476.5 418.5V432.06M477.5 418.5V440.95M478.5 418.5V442.07M479.5 418.5V443.15M480.5 418.5V441.54M481.5 418.5V498.5M482.5 418.5V458.5M483.5 418.5V420.71M484.5 418.5V419.53M485.5 418.5V419.83M486.5 418.5V420.68M487.5 418.5V419.71M488.5 418.5V419.94M489.5 418.5V420.35M490.5 418.5V419.56M491.5 418.5V419.57M492.5 418.5V419.64M493.5 418.5V419.74M494.5 418.5V419.65M495.5 418.5V420.29M496.5 418.5V420.52M497.5 418.5V420.79M498.5 418.5V420.21M499.5 418.5V420.3M500.5 418.5V419.91M501.5 418.5V419.71M502.5 418.5V419.8M503.5 418.5V420.72M504.5 418.5V420.66M505.5 418.5V420.69M506.5 418.5V420.77M507.5 418.5V421.03M508.5 418.5V420.88M509.5 418.5V420.54M510.5 418.5V420.9M511.5 418.5V420.56M512.5 418.5V419.81M513.5 418.5V420.62M514.5 418.5V420.98M515.5 418.5V423.5M516.5 418.5V419.71M517.5 418.5V420.94M518.5 418.5V420.36M519.5 418.5V420.93M520.5 418.5V419.9M521.5 418.5V420.01M522.5 418.5V420.07M523.5 418.5V420.15M524.5 418.5V420.43M525.5 418.5V421.2M526.5 418.5V428.5M527.5 418.5V423.54M528.5 418.5V424.55M529.5 418.5V428.07M530.5 418.5V430.52M531.5 418.5V431.74M532.5 418.5V437.74M533.5 418.5V436.64M534.5 418.5V439.65M535.5 418.5V446.25M536.5 418.5V443.79M537.5 418.5V473.5M538.5 418.5V445.4M539.5 418.5V439.8M540.5 418.5V445.22M541.5 418.5V460.4M542.5 418.5V439.49M543.5 418.5V463.22M544.5 418.5V452.03M545.5 418.5V443.85M546.5 418.5V461.73M547.5 418.5V449.7M548.5 418.5V470.5M549.5 418.5V448.96M550.5 418.5V473.5M551.5 418.5V441.27M552.5 418.5V453.23M553.5 418.5V438.79M554.5 418.5V433.17M555.5 418.5V436.61M556.5 418.5V428.77M557.5 418.5V429.76M558.5 418.5V429.17M559.5 418.5V430.99M560.5 418.5V429.13M561.5 418.5V434.69M562.5 418.5V428.19M563.5 418.5V452.5M564.5 418.5V426.91M565.5 418.5V430.34M566.5 418.5V425.39M567.5 418.5V431.36M568.5 418.5V426.54M569.5 418.5V430.15M570.5 418.5V432.1M571.5 418.5V433.79M572.5 418.5V426.21M573.5 418.5V433.2M574.5 418.5V433.39M575.5 418.5V427.29M576.5 418.5V429.71M577.5 418.5V432.92M578.5 418.5V428.05M579.5 418.5V427.59M580.5 418.5V426.53M581.5 418.5V426.64M582.5 418.5V427.2M583.5 418.5V434.04M584.5 418.5V425.17M585.5 418.5V433.88M586.5 418.5V425.08M587.5 418.5V448.5M588.5 418.5V433.92M589.5 418.5V448.5M590.5 418.5V428.59M591.5 418.5V431.04M592.5 418.5V425.11M593.5 418.5V423.74M594.5 418.5V428.01M595.5 418.5V425.02M596.5 418.5V430.77M597.5 418.5V425.53M598.5 418.5V425.03M599.5 418.5V445.5M600.5 418.5V423.7M601.5 418.5V431.84M602.5 418.5V434M603.5 418.5V427.59M604.5 418.5V433.23M605.5 418.5V433.43M606.5 418.5V423.75M607.5 418.5V432.53M608.5 418.5V430.38M609.5 418.5V427.33M610.5 418.5V426.43M611.5 418.5V428.99M612.5 418.5V428.19M613.5 418.5V423.9M614.5 418.5V430.51M615.5 418.5V440.5M616.5 418.5V430.07M617.5 418.5V432.42M618.5 418.5V424.14M619.5 418.5V430.16M620.5 418.5V425.91M621.5 418.5V429.24M622.5 418.5V424.96M623.5 418.5V440.5M624.5 418.5V425.14M625.5 418.5V425.78M626.5 418.5V427.95M627.5 418.5V423.47M628.5 418.5V422.9M629.5 418.5V426.02M630.5 418.5V427.93M631.5 418.5V424.41M632.5 418.5V427.9M633.5 418.5V422.78M634.5 418.5V426.77M635.5 418.5V424.41M636.5 418.5V429.18M637.5 418.5V431.02M638.5 418.5V431.44M639.5 418.5V424.51M640.5 418.5V422.65M641.5 418.5V437.5M642.5 418.5V428.13M643.5 418.5V431.86M644.5 418.5V423.47M645.5 418.5V429.51M646.5 418.5V426.48M647.5 418.5V423.69M648.5 418.5V431.41M649.5 418.5V422.67M650.5 418.5V428.16M651.5 418.5V430.47M652.5 418.5V426.91M653.5 418.5V422.5M654.5 418.5V431.31M655.5 418.5V429.18M656.5 418.5V428.81M657.5 418.5V432.5M658.5 418.5V426.27M659.5 418.5V424.94M660.5 418.5V430.32M661.5 418.5V428.68M662.5 418.5V428.32M663.5 418.5V425.66M664.5 418.5V429.26M665.5 418.5V423.18M666.5 418.5V422.98M667.5 418.5V431.42M668.5 418.5V428.55M669.5 418.5V424.14M670.5 418.5V423.08M671.5 418.5V425.15M672.5 418.5V430.85M673.5 418.5V426.2M674.5 418.5V427.11M675.5 418.5V425.34M676.5 418.5V425.79M677.5 418.5V422.84M678.5 418.5V423.74M679.5 418.5V424.12M680.5 418.5V422.04M681.5 418.5V430.43M682.5 418.5V422.15M683.5 418.5V423.48M684.5 418.5V426.47M685.5 418.5V428.7M686.5 418.5V423.8M687.5 418.5V423.99M688.5 418.5V422.24M689.5 418.5V422.22M690.5 418.5V423.17M691.5 418.5V428.27M692.5 418.5V423.82M693.5 418.5V422.35M694.5 418.5V421.95M695.5 418.5V428.06M696.5 418.5V427.26M697.5 418.5V422.85M698.5 418.5V427.24M699.5 418.5V427.41M700.5 418.5V421.94M701.5 418.5V425.75M702.5 418.5V424.12M703.5 418.5V423.03M704.5 418.5V427.46M705.5 418.5V422.2M706.5 418.5V424.22M707.5 418.5V428.77M708.5 418.5V425.97M709.5 418.5V428.88M710.5 418.5V424.23M711.5 418.5V426.82M712.5 418.5V424.38M713.5 418.5V422.46M714.5 418.5V428.57M715.5 418.5V423.41M716.5 418.5V424.41M717.5 418.5V424.79M718.5 418.5V425.72M719.5 418.5V425.28M720.5 418.5V426.55M721.5 418.5V426.64M722.5 418.5V422.58M723.5 418.5V428.23M724.5 418.5V427.87M725.5 418.5V422.03M726.5 418.5V421.39M727.5 418.5V428.22M728.5 418.5V422.33M729.5 418.5V422.6M730.5 418.5V421.36M731.5 418.5V425.52M732.5 418.5V427.83M733.5 418.5V427.74M734.5 418.5V426.32M735.5 418.5V422.36M736.5 418.5V421.88M737.5 418.5V422.55M738.5 418.5V423.25M739.5 418.5V427.8M740.5 418.5V423.28M741.5 418.5V422.17M742.5 418.5V427.66M743.5 418.5V422.95M744.5 418.5V428.5M745.5 418.5V424.71M746.5 418.5V422.04M747.5 418.5V423.4M748.5 418.5V422.88M749.5 418.5V421.69M750.5 418.5V424.44M751.5 418.5V422.48M752.5 418.5V421.93M753.5 418.5V428.51M754.5 418.5V424.92M755.5 418.5V421.25M756.5 418.5V421.6M757.5 418.5V422.06M758.5 418.5V424.27M759.5 418.5V422.45M760.5 418.5V422.29M761.5 418.5V425.17M762.5 418.5V424.85M763.5 418.5V421.21M764.5 418.5V421.6M765.5 418.5V428.15M766.5 418.5V425.92M767.5 418.5V425.95M768.5 418.5V422.38M769.5 418.5V424.12M770.5 418.5V421.33M771.5 418.5V427.39M772.5 418.5V421.97M773.5 418.5V422.17M774.5 418.5V421.89M775.5 418.5V425.93M776.5 418.5V421.44M777.5 418.5V423.69M778.5 418.5V426.35M779.5 418.5V427.5M780.5 418.5V426.8M781.5 418.5V424.83M782.5 418.5V422.58M783.5 418.5V423.9M784.5 418.5V423.09M785.5 418.5V423.91M786.5 418.5V424.04M787.5 418.5V426.56M788.5 418.5V428.06M789.5 418.5V425.53M790.5 418.5V427.33M791.5 418.5V423.84M792.5 418.5V421.93M793.5 418.5V423.56M794.5 418.5V427.86M795.5 418.5V421.43M796.5 418.5V424.59M797.5 418.5V426.5M798.5 418.5V422.95M799.5 418.5V426.2M800.5 418.5V424.1M801.5 418.5V421.16M802.5 418.5V426.52M803.5 418.5V425.82M804.5 418.5V423.64M805.5 418.5V422.78M806.5 418.5V421.06M807.5 418.5V427.04M808.5 418.5V427.1M809.5 418.5V423.92M810.5 418.5V424.48M811.5 418.5V422.21M812.5 418.5V425.48M813.5 418.5V423.37M814.5 418.5V423.17M815.5 418.5V421.18M816.5 418.5V426.01M817.5 418.5V425.37M818.5 418.5V422.9M819.5 418.5V422.44M820.5 418.5V421.14M821.5 418.5V421.08M822.5 418.5V427.61M823.5 418.5V425.19M824.5 418.5V425.19M825.5 418.5V422.44M826.5 418.5V421.51M827.5 418.5V421.73M828.5 418.5V425.19M829.5 418.5V422.16M830.5 418.5V425.83M831.5 418.5V427.34M832.5 418.5V421.7M833.5 418.5V424.29M834.5 418.5V422.88M835.5 418.5V426.08M836.5 418.5V422.27M837.5 418.5V425.61M838.5 418.5V427.01M839.5 418.5V421.34M840.5 418.5V423.98M841.5 418.5V422.85M842.5 418.5V425.28M843.5 418.5V426.22M844.5 418.5V423.84M845.5 418.5V421.66M846.5 418.5V422.6M847.5 418.5V424.89M848.5 418.5V420.98M849.5 418.5V421.67M850.5 418.5V426.71M851.5 418.5V426.92M852.5 418.5V422.84M853.5 418.5V422.42M854.5 418.5V421.01M855.5 418.5V425.49M856.5 418.5V427.99M857.5 418.5V425.46M858.5 418.5V423.22M859.5 418.5V425.22M860.5 418.5V421.29M861.5 418.5V427.84M862.5 418.5V424.6M863.5 418.5V422.7M864.5 418.5V421.05M865.5 418.5V422.96M866.5 418.5V424.09M867.5 418.5V425.27M868.5 418.5V424.54M869.5 418.5V421.81M870.5 418.5V427.49M871.5 418.5V423.41M872.5 418.5V421.86M873.5 418.5V426.29M874.5 418.5V422.72M875.5 418.5V421.27M876.5 418.5V420.92M877.5 418.5V425.86M878.5 418.5V423.43M879.5 418.5V426.93M880.5 418.5V423.51M881.5 418.5V427.24M882.5 418.5V426.78M883.5 418.5V422.38M884.5 418.5V422.73M885.5 418.5V422.54M886.5 418.5V422.15M887.5 418.5V427.87M888.5 418.5V422.37M889.5 418.5V423.98M890.5 418.5V426.53M891.5 418.5V421.15M892.5 418.5V426.82M893.5 418.5V425.15M894.5 418.5V421.05M895.5 418.5V427.89M896.5 418.5V422.34M897.5 418.5V426.34M898.5 418.5V421.21M899.5 418.5V426.91M900.5 418.5V421.62M901.5 418.5V421.87M902.5 418.5V424.78M903.5 418.5V422.95M904.5 418.5V424.28M905.5 418.5V424.05M906.5 418.5V423.5M907.5 418.5V422.74M908.5 418.5V423.37M909.5 418.5V423.24M910.5 418.5V423.71M911.5 418.5V422.65M912.5 418.5V422.83M913.5 418.5V422.59M914.5 418.5V421.23M915.5 418.5V421.72M916.5 418.5V422.48M917.5 418.5V421.27M918.5 418.5V424.86M919.5 418.5V420.92M920.5 418.5V424.86M921.5 418.5V427.09M922.5 418.5V423.54M923.5 418.5V423.87M924.5 418.5V427.14M925.5 418.5V425.57M926.5 418.5V426.61M927.5 418.5V427.13M928.5 418.5V424.31M929.5 418.5V421.01M930.5 418.5V425.73M931.5 418.5V421.53M932.5 418.5V426.35M933.5 418.5V423.45M934.5 418.5V421.13M935.5 418.5V422.47M936.5 418.5V425.54M937.5 418.5V421.93M938.5 418.5V424.88M939.5 418.5V426.54M940.5 418.5V426.12M941.5 418.5V422.5M942.5 418.5V426.39M943.5 418.5V426.93M944.5 418.5V422.6M945.5 418.5V420.7M946.5 418.5V426.22M947.5 418.5V425.01M948.5 418.5V421.11M949.5 418.5V426.06M950.5 418.5V426.1M951.5 418.5V424.33M952.5 418.5V421.95M953.5 418.5V421.07M954.5 418.5V421.11M955.5 418.5V424.06M956.5 418.5V423.39M957.5 418.5V423.3M958.5 418.5V424.65M959.5 418.5V424.84M960.5 418.5V421.49M961.5 418.5V426.73M962.5 418.5V425.42M963.5 418.5V421.83M964.5 418.5V424.16M965.5 418.5V421.81M966.5 418.5V421.38M967.5 418.5V421.58M968.5 418.5V422.75M969.5 418.5V421.01M970.5 418.5V423.07M971.5 418.5V426.51M972.5 418.5V424.17M973.5 418.5V424.46M974.5 418.5V426.27M975.5 418.5V425.2M976.5 418.5V427.21M977.5 418.5V424.22M978.5 418.5V426.39M979.5 418.5V420.55M980.5 418.5V424.16M981.5 418.5V422.2M982.5 418.5V425.35M983.5 418.5V423.79M984.5 418.5V426.04M985.5 418.5V424.21M986.5 418.5V422.83M987.5 418.5V423.78M988.5 418.5V420.63M989.5 418.5V424.51M990.5 418.5V426.49M991.5 418.5V422.18M992.5 418.5V422.78M993.5 418.5V424.85M994.5 418.5V421.24M995.5 418.5V423.19M996.5 418.5V425.21M997.5 418.5V425.77M998.5 418.5V422.82M999.5 418.5V423.83M1000.5 418.5V420.92M1001.5 418.5V424.01M1002.5 418.5V423.81M1003.5 418.5V424.64M1004.5 418.5V425.36M1005.5 418.5V425.11M1006.5 418.5V423.41M1007.5 418.5V427.06M1008.5 418.5V424.57M1009.5 418.5V420.43M1010.5 418.5V420.65M1011.5 418.5V421.82M1012.5 418.5V421.92M1013.5 418.5V426.16M1014.5 418.5V422.58M1015.5 418.5V420.4M1016.5 418.5V422.13M1017.5 418.5V421.33M1018.5 418.5V420.8M1019.5 418.5V426.31M1020.5 418.5V422.28M1021.5 418.5V426.83M1022.5 418.5V420.57M1023.5 418.5V425.77M1024.5 418.5V426.87M1025.5 418.5V423.93M1026.5 418.5V425.29M1027.5 418.5V420.95M1028.5 418.5V421.53M1029.5 418.5V431.9M1030.5 418.5V420.78M1031.5 418.5V428.75M1032.5 418.5V425.8M1033.5 418.5V433.08M1034.5 418.5V421.23M1035.5 418.5V437.63M1036.5 418.5V432.96M1037.5 418.5V426.24M1038.5 418.5V430.24M1039.5 418.5V425.64" stroke="#5f8a17" stroke-width="1" fill="none"/>
<path d="M447.5 418.5V421.34M448.5 418.5V423.43M449.5 418.5V422.47M450.5 418.5V424.07M451.5 418.5V425.52M452.5 418.5V425.85M453.5 418.5V427.04M454.5 418.5V425.29M455.5 418.5V425.15M456.5 418.5V422.49M457.5 418.5V422.02M458.5 418.5V426.84M459.5 418.5V425.73M460.5 418.5V425.83M461.5 418.5V425.56M462.5 418.5V427.5M463.5 418.5V458.7M464.5 418.5V434.94M465.5 418.5V434.7M466.5 418.5V431.44M467.5 418.5V428.88M468.5 418.5V436.19M469.5 418.5V431.34M470.5 418.5V436.28M471.5 418.5V426.76M472.5 418.5V436.63M473.5 418.5V433.25M474.5 418.5V426.67M475.5 418.5V426.26M476.5 418.5V428.03M477.5 418.5V435.28M478.5 418.5V432.05M479.5 418.5V433.26M480.5 418.5V432.73M481.5 418.5V470.78M482.5 418.5V448.96M483.5 418.5V420M484.5 418.5V419.25M485.5 418.5V419.44M486.5 418.5V419.93M487.5 418.5V419.43M488.5 418.5V419.48M489.5 418.5V419.8M490.5 418.5V419.21M491.5 418.5V419.25M492.5 418.5V419.21M493.5 418.5V419.33M494.5 418.5V419.14M495.5 418.5V419.5M496.5 418.5V419.91M497.5 418.5V419.89M498.5 418.5V419.83M499.5 418.5V419.92M500.5 418.5V419.61M501.5 418.5V419.42M502.5 418.5V419.29M503.5 418.5V419.76M504.5 418.5V420.22M505.5 418.5V419.75M506.5 418.5V419.83M507.5 418.5V420.2M508.5 418.5V420.19M509.5 418.5V419.85M510.5 418.5V420.27M511.5 418.5V419.77M512.5 418.5V419.25M513.5 418.5V420.04M514.5 418.5V420.33M515.5 418.5V422.17M516.5 418.5V419.44M517.5 418.5V420.42M518.5 418.5V419.56M519.5 418.5V420.21M520.5 418.5V419.3M521.5 418.5V419.35M522.5 418.5V419.43M523.5 418.5V419.63M524.5 418.5V419.69M525.5 418.5V420.13M526.5 418.5V425.13M527.5 418.5V422.45M528.5 418.5V423.31M529.5 418.5V424.65M530.5 418.5V425.88M531.5 418.5V429.05M532.5 418.5V431.55M533.5 418.5V431.96M534.5 418.5V433.9M535.5 418.5V437.99M536.5 418.5V434.59M537.5 418.5V451.66M538.5 418.5V436.64M539.5 418.5V434.3M540.5 418.5V433.93M541.5 418.5V446.15M542.5 418.5V430.88M543.5 418.5V453.58M544.5 418.5V438.79M545.5 418.5V434.38M546.5 418.5V451.66M547.5 418.5V442.81M548.5 418.5V451.23M549.5 418.5V441.89M550.5 418.5V451.56M551.5 418.5V434.31M552.5 418.5V438.51M553.5 418.5V432.58M554.5 418.5V427.76M555.5 418.5V432.5M556.5 418.5V425.05M557.5 418.5V425.61M558.5 418.5V425.27M559.5 418.5V428.14M560.5 418.5V426.68M561.5 418.5V430.43M562.5 418.5V424.65M563.5 418.5V444.16M564.5 418.5V425.21M565.5 418.5V426.28M566.5 418.5V423.68M567.5 418.5V426.7M568.5 418.5V424.47M569.5 418.5V427.1M570.5 418.5V429.05M571.5 418.5V429.63M572.5 418.5V424.49M573.5 418.5V429.22M574.5 418.5V429.36M575.5 418.5V424.83M576.5 418.5V427.06M577.5 418.5V429.91M578.5 418.5V424.34M579.5 418.5V425.02M580.5 418.5V423.1M581.5 418.5V424.08M582.5 418.5V425.22M583.5 418.5V428.35M584.5 418.5V423.49M585.5 418.5V428.87M586.5 418.5V423.65M587.5 418.5V442.42M588.5 418.5V430.81M589.5 418.5V440.95M590.5 418.5V426.34M591.5 418.5V425.61M592.5 418.5V423.33M593.5 418.5V421.97M594.5 418.5V423.75M595.5 418.5V422.67M596.5 418.5V426.72M597.5 418.5V423.44M598.5 418.5V422.29M599.5 418.5V438.46M600.5 418.5V421.81M601.5 418.5V428.01M602.5 418.5V430.07M603.5 418.5V425.53M604.5 418.5V430.22M605.5 418.5V429.26M606.5 418.5V422.34M607.5 418.5V429.05M608.5 418.5V425.86M609.5 418.5V425.29M610.5 418.5V424.29M611.5 418.5V425.24M612.5 418.5V424.09M613.5 418.5V422.16M614.5 418.5V426.88M615.5 418.5V434.92M616.5 418.5V426.23M617.5 418.5V428.31M618.5 418.5V422.65M619.5 418.5V426.23M620.5 418.5V422.88M621.5 418.5V426.08M622.5 418.5V423.03M623.5 418.5V431.56M624.5 418.5V422.67M625.5 418.5V422.88M626.5 418.5V425.85M627.5 418.5V421.32M628.5 418.5V421M629.5 418.5V422.71M630.5 418.5V424.07M631.5 418.5V422.5M632.5 418.5V425.44M633.5 418.5V420.96M634.5 418.5V423.91M635.5 418.5V422.46M636.5 418.5V424.55M637.5 418.5V427.3M638.5 418.5V427.32M639.5 418.5V422.73M640.5 418.5V421.47M641.5 418.5V430.45M642.5 418.5V426.12M643.5 418.5V426.86M644.5 418.5V422.28M645.5 418.5V427.28M646.5 418.5V423.29M647.5 418.5V421.37M648.5 418.5V428.82M649.5 418.5V421.28M650.5 418.5V424.72M651.5 418.5V427.47M652.5 418.5V423.22M653.5 418.5V421.33M654.5 418.5V427.17M655.5 418.5V425.42M656.5 418.5V425.2M657.5 418.5V427.28M658.5 418.5V423.71M659.5 418.5V422.06M660.5 418.5V425.92M661.5 418.5V425.4M662.5 418.5V425.94M663.5 418.5V424M664.5 418.5V427.05M665.5 418.5V421.87M666.5 418.5V420.99M667.5 418.5V428.55M668.5 418.5V425.15M669.5 418.5V422.6M670.5 418.5V421.05M671.5 418.5V423.36M672.5 418.5V428.02M673.5 418.5V423.73M674.5 418.5V423.61M675.5 418.5V423.11M676.5 418.5V423.61M677.5 418.5V421.96M678.5 418.5V422.47M679.5 418.5V421.99M680.5 418.5V420.67M681.5 418.5V426.95M682.5 418.5V421.01M683.5 418.5V421.27M684.5 418.5V424.75M685.5 418.5V425.6M686.5 418.5V421.45M687.5 418.5V421.73M688.5 418.5V421.12M689.5 418.5V420.72M690.5 418.5V421.76M691.5 418.5V425.29M692.5 418.5V422.32M693.5 418.5V421M694.5 418.5V420.5M695.5 418.5V425.89M696.5 418.5V425.13M697.5 418.5V421.66M698.5 418.5V423.4M699.5 418.5V424.73M700.5 418.5V420.4M701.5 418.5V422.67M702.5 418.5V421.79M703.5 418.5V421.23M704.5 418.5V423.65M705.5 418.5V421.15M706.5 418.5V421.86M707.5 418.5V425.7M708.5 418.5V424.16M709.5 418.5V424.65M710.5 418.5V423.03M711.5 418.5V424.58M712.5 418.5V422.41M713.5 418.5V420.84M714.5 418.5V424.44M715.5 418.5V422.13M716.5 418.5V422.38M717.5 418.5V422.36M718.5 418.5V422.98M719.5 418.5V423.3M720.5 418.5V423.36M721.5 418.5V424.52M722.5 418.5V421.74M723.5 418.5V424.54M724.5 418.5V425.99M725.5 418.5V420.69M726.5 418.5V420.34M727.5 418.5V425.53M728.5 418.5V421.44M729.5 418.5V421.43M730.5 418.5V420.58M731.5 418.5V422.54M732.5 418.5V424.61M733.5 418.5V425.7M734.5 418.5V423.28M735.5 418.5V421.2M736.5 418.5V420.48M737.5 418.5V421.09M738.5 418.5V421.99M739.5 418.5V424.99M740.5 418.5V421.78M741.5 418.5V420.84M742.5 418.5V424.58M743.5 418.5V421.58M744.5 418.5V425.72M745.5 418.5V422.64M746.5 418.5V421.16M747.5 418.5V421.24M748.5 418.5V421.2M749.5 418.5V420.5M750.5 418.5V422.64M751.5 418.5V421.46M752.5 418.5V420.46M753.5 418.5V425.01M754.5 418.5V423.48M755.5 418.5V420.59M756.5 418.5V420.8M757.5 418.5V421.12M758.5 418.5V422.55M759.5 418.5V421.02M760.5 418.5V421.33M761.5 418.5V422.44M762.5 418.5V422.7M763.5 418.5V420.26M764.5 418.5V420.97M765.5 418.5V424.41M766.5 418.5V423.04M767.5 418.5V423.7M768.5 418.5V420.89M769.5 418.5V422.18M770.5 418.5V420.76M771.5 418.5V425.38M772.5 418.5V420.61M773.5 418.5V421.08M774.5 418.5V420.81M775.5 418.5V423.86M776.5 418.5V420.21M777.5 418.5V422.28M778.5 418.5V424.21M779.5 418.5V424.96M780.5 418.5V423.78M781.5 418.5V423.53M782.5 418.5V420.85M783.5 418.5V422.11M784.5 418.5V421.69M785.5 418.5V421.67M786.5 418.5V422.11M787.5 418.5V423.41M788.5 418.5V424.64M789.5 418.5V423.24M790.5 418.5V423.88M791.5 418.5V422.05M792.5 418.5V420.63M793.5 418.5V421.68M794.5 418.5V425.1M795.5 418.5V420.57M796.5 418.5V421.92M797.5 418.5V424.03M798.5 418.5V421.37M799.5 418.5V424.17M800.5 418.5V421.99M801.5 418.5V420.34M802.5 418.5V424.85M803.5 418.5V422.9M804.5 418.5V422.45M805.5 418.5V421.6M806.5 418.5V420.12M807.5 418.5V423.6M808.5 418.5V424.87M809.5 418.5V421.79M810.5 418.5V422.24M811.5 418.5V421.12M812.5 418.5V423.88M813.5 418.5V422.31M814.5 418.5V421.4M815.5 418.5V420.22M816.5 418.5V423.47M817.5 418.5V423.55M818.5 418.5V421.76M819.5 418.5V421.33M820.5 418.5V420.43M821.5 418.5V420.53M822.5 418.5V424.41M823.5 418.5V422.68M824.5 418.5V422.75M825.5 418.5V421.55M826.5 418.5V420.54M827.5 418.5V420.94M828.5 418.5V423.49M829.5 418.5V421.13M830.5 418.5V422.81M831.5 418.5V424.89M832.5 418.5V420.35M833.5 418.5V423.12M834.5 418.5V421.22M835.5 418.5V424.05M836.5 418.5V420.95M837.5 418.5V423.49M838.5 418.5V423.46M839.5 418.5V420.25M840.5 418.5V422.71M841.5 418.5V421.3M842.5 418.5V422.8M843.5 418.5V422.89M844.5 418.5V421.98M845.5 418.5V420.34M846.5 418.5V421.01M847.5 418.5V423.13M848.5 418.5V420.13M849.5 418.5V420.83M850.5 418.5V424.03M851.5 418.5V423.25M852.5 418.5V421.01M853.5 418.5V421.58M854.5 418.5V420.01M855.5 418.5V422.75M856.5 418.5V425.94M857.5 418.5V424.01M858.5 418.5V422.2M859.5 418.5V423.71M860.5 418.5V420.08M861.5 418.5V425.31M862.5 418.5V422.53M863.5 418.5V421.78M864.5 418.5V420.29M865.5 418.5V421.09M866.5 418.5V422.09M867.5 418.5V422.96M868.5 418.5V422.69M869.5 418.5V420.54M870.5 418.5V423.68M871.5 418.5V422.36M872.5 418.5V420.87M873.5 418.5V422.92M874.5 418.5V421.15M875.5 418.5V420.27M876.5 418.5V420.12M877.5 418.5V423.55M878.5 418.5V421.53M879.5 418.5V423.55M880.5 418.5V421.81M881.5 418.5V425.26M882.5 418.5V424M883.5 418.5V420.69M884.5 418.5V420.87M885.5 418.5V421.56M886.5 418.5V420.62M887.5 418.5V424.77M888.5 418.5V421.12M889.5 418.5V422.57M890.5 418.5V424.29M891.5 418.5V420.17M892.5 418.5V424.89M893.5 418.5V422.38M894.5 418.5V420.19M895.5 418.5V423.89M896.5 418.5V420.79M897.5 418.5V423.75M898.5 418.5V420.4M899.5 418.5V424.85M900.5 418.5V420.93M901.5 418.5V420.81M902.5 418.5V422.92M903.5 418.5V421M904.5 418.5V422.72M905.5 418.5V422.74M906.5 418.5V421.76M907.5 418.5V421.86M908.5 418.5V421.98M909.5 418.5V421.4M910.5 418.5V422.4M911.5 418.5V421.81M912.5 418.5V421.06M913.5 418.5V421.38M914.5 418.5V420.33M915.5 418.5V420.68M916.5 418.5V421.37M917.5 418.5V420.57M918.5 418.5V423.18M919.5 418.5V419.92M920.5 418.5V422.06M921.5 418.5V424.52M922.5 418.5V422.22M923.5 418.5V422.45M924.5 418.5V424.13M925.5 418.5V424.13M926.5 418.5V423.01M927.5 418.5V423.89M928.5 418.5V422.25M929.5 418.5V419.99M930.5 418.5V423.35M931.5 418.5V420.35M932.5 418.5V423.41M933.5 418.5V421.89M934.5 418.5V420.48M935.5 418.5V421.22M936.5 418.5V422.97M937.5 418.5V420.43M938.5 418.5V423.29M939.5 418.5V423.73M940.5 418.5V423.27M941.5 418.5V420.76M942.5 418.5V424.38M943.5 418.5V423.4M944.5 418.5V420.77M945.5 418.5V420.16M946.5 418.5V422.83M947.5 418.5V423.07M948.5 418.5V420.31M949.5 418.5V424.27M950.5 418.5V423.65M951.5 418.5V422.9M952.5 418.5V421.11M953.5 418.5V420.43M954.5 418.5V419.96M955.5 418.5V422.47M956.5 418.5V421.32M957.5 418.5V422.33M958.5 418.5V422.9M959.5 418.5V422.16M960.5 418.5V420.46M961.5 418.5V423.22M962.5 418.5V422.42M963.5 418.5V420.66M964.5 418.5V422.68M965.5 418.5V420.7M966.5 418.5V420.49M967.5 418.5V420.32M968.5 418.5V421.9M969.5 418.5V420.49M970.5 418.5V421.7M971.5 418.5V423.6M972.5 418.5V422.78M973.5 418.5V422.86M974.5 418.5V423.94M975.5 418.5V422.39M976.5 418.5V425.18M977.5 418.5V422.55M978.5 418.5V423.09M979.5 418.5V420.14M980.5 418.5V422.85M981.5 418.5V421.14M982.5 418.5V422.96M983.5 418.5V421.91M984.5 418.5V423.18M985.5 418.5V421.97M986.5 418.5V421.52M987.5 418.5V422.06M988.5 418.5V419.84M989.5 418.5V421.93M990.5 418.5V424.6M991.5 418.5V420.77M992.5 418.5V420.91M993.5 418.5V423.34M994.5 418.5V420.17M995.5 418.5V421.42M996.5 418.5V423.16M997.5 418.5V423.5M998.5 418.5V421.81M999.5 418.5V422.25M1000.5 418.5V420.04M1001.5 418.5V422.61M1002.5 418.5V422.45M1003.5 418.5V423.05M1004.5 418.5V422.3M1005.5 418.5V423.28M1006.5 418.5V421.98M1007.5 418.5V423.45M1008.5 418.5V421.9M1009.5 418.5V419.87M1010.5 418.5V419.76M1011.5 418.5V420.73M1012.5 418.5V420.4M1013.5 418.5V423.08M1014.5 418.5V420.92M1015.5 418.5V419.66M1016.5 418.5V420.57M1017.5 418.5V420.73M1018.5 418.5V419.93M1019.5 418.5V424.37M1020.5 418.5V421.09M1021.5 418.5V424.7M1022.5 418.5V420.16M1023.5 418.5V423.86M1024.5 418.5V424.68M1025.5 418.5V422.31M1026.5 418.5V422.4M1027.5 418.5V420.02M1028.5 418.5V420.31M1029.5 418.5V429.14M1030.5 418.5V419.86M1031.5 418.5V426.28M1032.5 418.5V424.03M1033.5 418.5V428.63M1034.5 418.5V420.33M1035.5 418.5V429.26M1036.5 418.5V427.59M1037.5 418.5V423.18M1038.5 418.5V426.93M1039.5 418.5V422.61" stroke="#88c626" stroke-width="1" fill="none"/>
<path d="M1040.5 405V441M178.5 405V432M187.5 404V433M229.5 414V422M1056.5 413V424M1064.5 411V425" stroke="#5f8c18" stroke-width="1" fill="none"/>
<path d="M1040.5 411V432M186.5 410V428M187.5 408V430M188.5 412V425" stroke="#80b822" stroke-width="1" fill="none"/>
<rect x="4" y="707" width="1747" height="2" fill="#2d2dd6"/>
<path d="M451.5 708.5V706.24M452.5 708.5V706.73M455.5 708.5V706.87M456.5 708.5V705.99M457.5 708.5V706.21M460.5 708.5V705.94M462.5 708.5V705.91M463.5 708.5V706.28M464.5 708.5V705.99M465.5 708.5V706.83M466.5 708.5V706.69M467.5 708.5V706.14M468.5 708.5V705.77M469.5 708.5V706.33M473.5 708.5V706.44M475.5 708.5V705.71M477.5 708.5V706.44M479.5 708.5V706.1M481.5 708.5V706.42M484.5 708.5V707.59M485.5 708.5V707.77M487.5 708.5V707.6M488.5 708.5V707.53M489.5 708.5V707.63M492.5 708.5V707.79M494.5 708.5V707.8M495.5 708.5V707.55M496.5 708.5V707.65M497.5 708.5V707.78M498.5 708.5V707.82M499.5 708.5V707.62M501.5 708.5V707.59M502.5 708.5V707.73M504.5 708.5V707.8M507.5 708.5V707.82M510.5 708.5V707.7M515.5 708.5V707.52M516.5 708.5V707.83M517.5 708.5V707.58M518.5 708.5V707.59M519.5 708.5V707.66M521.5 708.5V707.52M523.5 708.5V707.66M524.5 708.5V707.74M525.5 708.5V707.71M526.5 708.5V707.83M527.5 708.5V707.67M528.5 708.5V707.54M529.5 708.5V707.06M532.5 708.5V707.11M534.5 708.5V706.25M536.5 708.5V706.55M537.5 708.5V700.5M538.5 708.5V704.39M540.5 708.5V700.37M541.5 708.5V705.75M544.5 708.5V703.04M545.5 708.5V703.81M547.5 708.5V688.5M548.5 708.5V699.81M551.5 708.5V696.47M553.5 708.5V683.5M559.5 708.5V645.5M560.5 708.5V650.26M564.5 708.5V684.38M565.5 708.5V693.39M566.5 708.5V699.68M569.5 708.5V694.35M570.5 708.5V645.5M572.5 708.5V660.69M573.5 708.5V674.76M579.5 708.5V645.5M580.5 708.5V663.64M582.5 708.5V692.18M583.5 708.5V645.5M585.5 708.5V677.09M586.5 708.5V689.17M587.5 708.5V695.63M588.5 708.5V694.74M589.5 708.5V676.96M592.5 708.5V696.65M593.5 708.5V697.66M594.5 708.5V645.5M596.5 708.5V667.83M597.5 708.5V685.83M598.5 708.5V695.79M599.5 708.5V692.25M600.5 708.5V645.5M602.5 708.5V653.89M606.5 708.5V672.23M608.5 708.5V691.25M609.5 708.5V695.2M612.5 708.5V645.5M614.5 708.5V645.5M616.5 708.5V672.29M619.5 708.5V693.49M624.5 708.5V662.59M628.5 708.5V691.24M629.5 708.5V694.65M631.5 708.5V645.5M632.5 708.5V663.67M633.5 708.5V672.54M634.5 708.5V681.58M638.5 708.5V663.96M640.5 708.5V645.5M643.5 708.5V645.5M647.5 708.5V645.5M648.5 708.5V645.5M652.5 708.5V661.96M653.5 708.5V645.5M654.5 708.5V653.38M655.5 708.5V669.01M657.5 708.5V647.54M659.5 708.5V645.5M661.5 708.5V645.5M662.5 708.5V651.29M665.5 708.5V645.5M666.5 708.5V645.5M672.5 708.5V645.5M673.5 708.5V645.5M674.5 708.5V645.5M676.5 708.5V645.5M677.5 708.5V645.5M678.5 708.5V645.5M680.5 708.5V645.5M681.5 708.5V645.5M682.5 708.5V645.5M684.5 708.5V645.5M685.5 708.5V645.5M688.5 708.5V658.45M689.5 708.5V645.5M690.5 708.5V645.5M691.5 708.5V645.5M695.5 708.5V645.5M701.5 708.5V645.5M702.5 708.5V645.5M703.5 708.5V645.5M704.5 708.5V645.5M465.5 708.5V699.5M481.5 708.5V690.5M482.5 708.5V700.5M705.5 707.38V645.5M706.5 702.78V661.91M707.5 696V659.33M709.5 706.88V645.5M713.5 706.48V645.5M714.5 707.49V690.28M715.5 706.91V682.17M716.5 706.68V669.43M719.5 706.93V645.5M723.5 705.76V670.59M730.5 707.38V645.5M731.5 707.1V673.67M732.5 707.06V660.1M733.5 707.65V645.5M735.5 707.2V645.5M738.5 708.11V645.5M741.5 708.11V664.66M742.5 706.87V662.43M744.5 705.61V645.5M745.5 705.22V645.5M746.5 703.95V668.96M747.5 705.33V645.5M751.5 702.87V645.5M753.5 708.03V660.58M757.5 705.57V685.72M760.5 706.02V645.5M761.5 706.52V682.97M762.5 705.51V645.5M763.5 706.24V645.5M764.5 707.14V665.1M765.5 706.81V661.74M766.5 706.85V661.68M773.5 698.6V645.5M775.5 693.07V645.5M777.5 703.05V681.94M778.5 708.26V685.03M779.5 707.99V645.5M782.5 706.14V645.5M786.5 703.35V660.55M789.5 700.3V645.5M790.5 701.17V645.5M791.5 704.62V645.5M793.5 707.9V645.5M794.5 706.62V671.2M795.5 708.01V669.42M798.5 708.2V645.5M799.5 706.73V645.5M800.5 703.93V645.5M801.5 699.96V645.5M802.5 699.58V645.5M806.5 705.91V676.74M807.5 706.01V675.17M808.5 705.02V645.5M809.5 701.93V647.72M810.5 701.05V645.5M815.5 695.08V645.5M817.5 693.27V645.5M818.5 694.8V645.5M819.5 701.7V645.5M821.5 705.62V645.5M823.5 705.53V654.61M824.5 707.64V654.91M826.5 707.28V645.5M827.5 706.28V662.33M828.5 706.4V659.3M829.5 705.74V660.1M831.5 706.88V663.18M832.5 706.71V660.02M833.5 707.4V658.19M834.5 707.12V645.5M835.5 707.92V645.5M839.5 704.86V647.49M842.5 694.78V688.23M843.5 693.67V645.5M845.5 698.6V645.5M848.5 706.49V645.5M849.5 707.72V672.88M854.5 706.06V660.65M855.5 704.84V658.29M861.5 708.12V675.46M862.5 708.17V645.5M863.5 706.05V663.36M869.5 707.99V686.61M870.5 706.81V696.83M871.5 706.18V700.06M872.5 705.69V645.5M873.5 708.4V645.5M876.5 705.73V688.5M880.5 708.5V699.35M883.5 708.5V693.28M885.5 708.5V689.22M887.5 708.5V697.58M889.5 708.5V667.79M891.5 708.5V704.03M892.5 708.5V701.66M894.5 708.5V700.23M895.5 708.5V699.67M896.5 708.5V701.08M897.5 708.5V701.09M898.5 708.5V699.47M900.5 708.5V697.61M903.5 708.5V701.96M906.5 708.5V704.45M907.5 708.5V687.22M908.5 708.5V674.03M910.5 708.5V701.7M913.5 708.5V689.05M916.5 708.5V701.31M917.5 708.5V701.11M919.5 708.5V701.34M920.5 708.5V702.41M923.5 708.5V697.54M925.5 708.5V698.26M926.5 708.5V700.47M927.5 708.5V702.41M928.5 708.5V700.08M929.5 708.5V695.92M932.5 708.5V699.98M933.5 708.5V701.61M934.5 708.5V702.52M935.5 708.5V704M941.5 708.5V697.87M942.5 708.5V700.18M945.5 708.5V697.57M946.5 708.5V691.49M952.5 708.5V699.06M953.5 708.5V695.94M956.5 708.5V700.72M958.5 708.5V689.93M963.5 708.5V671.86M964.5 708.5V676.16M965.5 708.5V666.68M969.5 708.5V701.45M970.5 708.5V702.87M971.5 708.5V699.62M974.5 708.5V701.41M976.5 708.5V701.38M977.5 708.5V700.51M979.5 708.5V684.63M981.5 708.5V677.18M985.5 708.5V645.5M986.5 708.5V645.5M987.5 708.5V645.5M990.5 708.5V685.41M995.5 708.5V682.53M997.5 708.5V688.61M998.5 708.5V690.29M999.5 708.5V684.53M1001.5 708.5V680.02M1002.5 708.5V693.7M1003.5 708.5V684.39M1007.5 708.5V645.5M1008.5 708.5V645.5M1009.5 708.5V674.78M1013.5 708.5V645.5M1014.5 708.5V674.78M1018.5 708.5V645.5M1019.5 708.5V645.5M1021.5 708.5V645.5M1022.5 708.5V645.5M1023.5 708.5V645.5M1024.5 708.5V674.78M1025.5 708.5V676.15M1027.5 708.5V645.5M1029.5 708.5V645.5M1031.5 708.5V674.78M1032.5 708.5V645.5M1033.5 708.5V645.5M1035.5 708.5V674.78M1038.5 708.5V675.3M1039.5 708.5V682.1M1041.5 708.5V695.7" stroke="#171790" stroke-width="1" fill="none"/>
<path d="M450.5 708.5V706.21M453.5 708.5V706.66M454.5 708.5V706.07M458.5 708.5V706.73M459.5 708.5V705.88M461.5 708.5V706.13M470.5 708.5V706.4M471.5 708.5V706.35M472.5 708.5V705.94M474.5 708.5V706.52M476.5 708.5V706.28M478.5 708.5V706.11M480.5 708.5V706.63M482.5 708.5V706.35M483.5 708.5V707.64M486.5 708.5V707.6M490.5 708.5V707.69M491.5 708.5V707.86M493.5 708.5V707.73M500.5 708.5V707.68M503.5 708.5V707.63M505.5 708.5V707.73M506.5 708.5V707.78M508.5 708.5V707.5M509.5 708.5V707.65M511.5 708.5V707.54M512.5 708.5V707.76M513.5 708.5V707.76M514.5 708.5V707.88M520.5 708.5V707.63M522.5 708.5V707.71M530.5 708.5V707.03M531.5 708.5V706.95M533.5 708.5V706.96M535.5 708.5V705.89M539.5 708.5V645.5M542.5 708.5V704.54M543.5 708.5V699.5M546.5 708.5V703.21M549.5 708.5V703.38M550.5 708.5V666.5M552.5 708.5V701.13M554.5 708.5V699.3M555.5 708.5V702.5M556.5 708.5V699.93M557.5 708.5V645.5M558.5 708.5V645.5M561.5 708.5V670.33M562.5 708.5V683.48M563.5 708.5V692.1M567.5 708.5V697.76M568.5 708.5V682.44M571.5 708.5V645.5M574.5 708.5V645.5M575.5 708.5V645.5M576.5 708.5V645.5M577.5 708.5V664.52M578.5 708.5V645.5M581.5 708.5V681.44M584.5 708.5V660.39M590.5 708.5V686.81M591.5 708.5V693.59M595.5 708.5V645.5M601.5 708.5V645.5M603.5 708.5V645.5M604.5 708.5V654.92M605.5 708.5V679.08M607.5 708.5V680.59M610.5 708.5V696.01M611.5 708.5V682.68M613.5 708.5V645.5M615.5 708.5V656.63M617.5 708.5V683.22M618.5 708.5V689.06M620.5 708.5V687.01M621.5 708.5V645.5M622.5 708.5V645.5M623.5 708.5V645.5M625.5 708.5V677.31M626.5 708.5V687.32M627.5 708.5V693.48M630.5 708.5V674.74M635.5 708.5V645.5M636.5 708.5V645.5M637.5 708.5V661.6M639.5 708.5V645.5M641.5 708.5V645.5M642.5 708.5V645.5M644.5 708.5V654.63M645.5 708.5V645.5M646.5 708.5V672.9M649.5 708.5V645.5M650.5 708.5V645.5M651.5 708.5V645.5M656.5 708.5V645.5M658.5 708.5V665.02M660.5 708.5V645.5M663.5 708.5V674.01M664.5 708.5V677.19M667.5 708.5V648.4M668.5 708.5V669.63M669.5 708.5V686.64M670.5 708.5V685.77M671.5 708.5V645.5M675.5 708.5V645.5M679.5 708.5V645.5M683.5 708.5V645.5M686.5 708.5V645.5M687.5 708.5V645.5M692.5 708.5V652.74M693.5 708.5V652.45M694.5 708.5V645.5M696.5 708.5V645.5M697.5 708.5V645.5M698.5 708.5V645.5M699.5 708.5V649.73M700.5 708.5V645.5M463.5 708.5V697.5M708.5 701.65V645.5M710.5 705.53V645.5M711.5 707.4V645.5M712.5 706.08V645.5M717.5 705.67V645.5M718.5 707.63V645.5M720.5 707.19V645.5M721.5 705.98V645.5M722.5 705.92V645.5M724.5 706.13V655.96M725.5 706.2V645.5M726.5 707.01V645.5M727.5 705.56V675.15M728.5 705.69V645.5M729.5 705.81V645.5M734.5 707.21V689.71M736.5 707.21V645.5M737.5 706.64V645.5M739.5 708.13V645.5M740.5 705.68V663.07M743.5 705.6V645.5M748.5 701.91V645.5M749.5 698.91V689.21M750.5 701.37V689.55M752.5 706.24V645.5M754.5 705.73V686.8M755.5 707.63V645.5M756.5 708.2V645.5M758.5 706.03V645.5M759.5 707.02V645.5M767.5 707.07V687.67M768.5 706.12V645.5M769.5 705.52V645.5M770.5 706.99V648.12M771.5 704.94V656.42M772.5 702.98V665.52M774.5 697.82V645.5M776.5 699.42V645.5M780.5 708.21V645.5M781.5 707.39V671.52M783.5 706.25V645.5M784.5 705.94V645.5M785.5 704.56V678.64M787.5 703.63V675.87M788.5 703.23V663.77M792.5 705.02V665.92M796.5 707.33V645.5M797.5 705.86V645.5M803.5 697.55V645.5M804.5 703.24V645.5M805.5 703.96V682.12M811.5 700.84V663.51M812.5 698.19V653.5M816.5 688.02V645.5M820.5 703.42V645.5M822.5 706.86V653.78M825.5 706.24V645.5M830.5 704.95V658.25M836.5 707.14V645.5M837.5 706.92V671.78M838.5 706.15V645.5M840.5 701.68V645.5M841.5 699.06V687.32M844.5 695.93V645.5M846.5 703.48V645.5M847.5 706.72V645.5M850.5 706.83V672.17M851.5 705.72V645.5M852.5 707.24V645.5M853.5 705.6V674.47M856.5 705.67V645.5M857.5 705.01V645.5M858.5 706.08V677.91M859.5 707.21V645.5M860.5 706.61V669.99M864.5 708.14V670.91M865.5 706.42V675.99M866.5 706V675.88M867.5 706.7V676.75M868.5 706.93V687.61M874.5 707.87V645.5M875.5 706.5V688.5M877.5 707.54V688.5M878.5 708.5V702.2M879.5 708.5V702.28M881.5 708.5V693.89M882.5 708.5V690.77M884.5 708.5V691.52M886.5 708.5V691M888.5 708.5V648.55M890.5 708.5V698.53M893.5 708.5V701.07M899.5 708.5V697.18M901.5 708.5V697.03M902.5 708.5V700.71M904.5 708.5V700.83M905.5 708.5V702.02M909.5 708.5V685.71M911.5 708.5V702.51M912.5 708.5V703.04M914.5 708.5V674.47M915.5 708.5V693.54M918.5 708.5V704.35M921.5 708.5V701.52M922.5 708.5V699.96M924.5 708.5V694.65M930.5 708.5V696.8M931.5 708.5V697.12M936.5 708.5V703.06M937.5 708.5V700.07M938.5 708.5V701.39M939.5 708.5V697.99M940.5 708.5V697.88M943.5 708.5V699.7M944.5 708.5V700.27M947.5 708.5V692.96M948.5 708.5V692.01M949.5 708.5V697.04M950.5 708.5V702.14M951.5 708.5V700.72M954.5 708.5V698.19M955.5 708.5V700.99M957.5 708.5V695.66M959.5 708.5V682.54M960.5 708.5V672.59M961.5 708.5V669.97M962.5 708.5V666.13M966.5 708.5V671.04M967.5 708.5V685.4M968.5 708.5V693.56M972.5 708.5V703.29M973.5 708.5V703.13M975.5 708.5V702.35M978.5 708.5V691.96M980.5 708.5V676.87M982.5 708.5V667.19M983.5 708.5V657.77M984.5 708.5V645.5M988.5 708.5V674.78M989.5 708.5V682.14M991.5 708.5V676.15M992.5 708.5V645.5M993.5 708.5V645.5M994.5 708.5V674.78M996.5 708.5V679.18M1000.5 708.5V685.09M1004.5 708.5V676.15M1005.5 708.5V645.5M1006.5 708.5V645.5M1010.5 708.5V689.16M1011.5 708.5V681.64M1012.5 708.5V676.15M1015.5 708.5V690.45M1016.5 708.5V691.89M1017.5 708.5V676.15M1020.5 708.5V645.5M1026.5 708.5V645.5M1028.5 708.5V645.5M1030.5 708.5V645.5M1034.5 708.5V645.5M1036.5 708.5V645.5M1037.5 708.5V645.5M1040.5 708.5V688.9" stroke="#1e1ea8" stroke-width="1" fill="none"/>
<path d="M450.5 708.5V706.55M451.5 708.5V706.58M452.5 708.5V707M453.5 708.5V706.94M454.5 708.5V706.43M455.5 708.5V707.11M456.5 708.5V706.37M457.5 708.5V706.55M458.5 708.5V706.99M459.5 708.5V706.27M460.5 708.5V706.32M461.5 708.5V706.49M462.5 708.5V706.3M463.5 708.5V706.62M464.5 708.5V706.37M465.5 708.5V707.08M466.5 708.5V706.97M467.5 708.5V706.5M468.5 708.5V706.18M469.5 708.5V706.65M470.5 708.5V706.72M471.5 708.5V706.67M472.5 708.5V706.32M473.5 708.5V706.75M474.5 708.5V706.81M475.5 708.5V706.13M476.5 708.5V706.61M477.5 708.5V706.75M478.5 708.5V706.47M479.5 708.5V706.46M480.5 708.5V706.91M481.5 708.5V706.73M482.5 708.5V706.67M483.5 708.5V707.77M484.5 708.5V707.73M485.5 708.5V707.88M486.5 708.5V707.74M487.5 708.5V707.73M488.5 708.5V707.67M489.5 708.5V707.76M490.5 708.5V707.81M491.5 708.5V707.96M492.5 708.5V707.9M493.5 708.5V707.85M494.5 708.5V707.91M495.5 708.5V707.7M496.5 708.5V707.78M497.5 708.5V707.89M498.5 708.5V707.92M499.5 708.5V707.75M500.5 708.5V707.8M501.5 708.5V707.72M502.5 708.5V707.84M503.5 708.5V707.76M504.5 708.5V707.9M505.5 708.5V707.84M506.5 708.5V707.89M507.5 708.5V707.92M508.5 708.5V707.65M509.5 708.5V707.78M510.5 708.5V707.82M511.5 708.5V707.69M512.5 708.5V707.87M513.5 708.5V707.87M514.5 708.5V707.97M515.5 708.5V707.66M516.5 708.5V707.93M517.5 708.5V707.72M518.5 708.5V707.73M519.5 708.5V707.79M520.5 708.5V707.76M521.5 708.5V707.66M522.5 708.5V707.83M523.5 708.5V707.79M524.5 708.5V707.86M525.5 708.5V707.83M526.5 708.5V707.93M527.5 708.5V707.79M528.5 708.5V707.68M529.5 708.5V707.28M530.5 708.5V707.25M531.5 708.5V707.18M532.5 708.5V707.32M533.5 708.5V707.19M534.5 708.5V706.59M535.5 708.5V706.28M536.5 708.5V706.84M537.5 708.5V704.6M538.5 708.5V705.52M539.5 708.5V683.96M540.5 708.5V705.41M541.5 708.5V706.16M542.5 708.5V705.14M543.5 708.5V703.81M544.5 708.5V704.45M545.5 708.5V704.51M546.5 708.5V704M547.5 708.5V700.14M548.5 708.5V704.16M549.5 708.5V704.15M550.5 708.5V687.73M551.5 708.5V703.86M552.5 708.5V702.24M553.5 708.5V698.74M554.5 708.5V702.18M555.5 708.5V703.4M556.5 708.5V701.21M557.5 708.5V679.14M558.5 708.5V674.69M559.5 708.5V677.15M560.5 708.5V686.23M561.5 708.5V694.57M562.5 708.5V700.12M563.5 708.5V699.77M564.5 708.5V697.47M565.5 708.5V700.32M566.5 708.5V701M567.5 708.5V699.37M568.5 708.5V695.45M569.5 708.5V700.83M570.5 708.5V681.83M571.5 708.5V686.02M572.5 708.5V691.69M573.5 708.5V692.22M574.5 708.5V680.17M575.5 708.5V678.01M576.5 708.5V675M577.5 708.5V694.28M578.5 708.5V685.36M579.5 708.5V675.08M580.5 708.5V685.69M581.5 708.5V697.1M582.5 708.5V699.28M583.5 708.5V682.08M584.5 708.5V693.76M585.5 708.5V698.07M586.5 708.5V695.74M587.5 708.5V697.56M588.5 708.5V696.8M589.5 708.5V694.46M590.5 708.5V698.59M591.5 708.5V699.96M592.5 708.5V698.43M593.5 708.5V699.29M594.5 708.5V689.02M595.5 708.5V676.24M596.5 708.5V690.98M597.5 708.5V694.95M598.5 708.5V697.97M599.5 708.5V694.69M600.5 708.5V682.13M601.5 708.5V685.65M602.5 708.5V683.47M603.5 708.5V685.76M604.5 708.5V689.52M605.5 708.5V696.17M606.5 708.5V691.81M607.5 708.5V692.94M608.5 708.5V695.52M609.5 708.5V697.2M610.5 708.5V697.88M611.5 708.5V696.6M612.5 708.5V686.08M613.5 708.5V679.6M614.5 708.5V674.77M615.5 708.5V688.87M616.5 708.5V692.74M617.5 708.5V696.12M618.5 708.5V691.97M619.5 708.5V695.74M620.5 708.5V692.73M621.5 708.5V684.23M622.5 708.5V675.79M623.5 708.5V681.27M624.5 708.5V688.1M625.5 708.5V694.11M626.5 708.5V695.79M627.5 708.5V697.88M628.5 708.5V693.83M629.5 708.5V696.73M630.5 708.5V693.94M631.5 708.5V681.43M632.5 708.5V687.82M633.5 708.5V689.87M634.5 708.5V693.82M635.5 708.5V674.71M636.5 708.5V682.89M637.5 708.5V683.45M638.5 708.5V694.94M639.5 708.5V682.19M640.5 708.5V688.55M641.5 708.5V678.14M642.5 708.5V686.83M643.5 708.5V682.72M644.5 708.5V685.82M645.5 708.5V681.53M646.5 708.5V689.31M647.5 708.5V681.88M648.5 708.5V683.67M649.5 708.5V675.67M650.5 708.5V677.52M651.5 708.5V680.92M652.5 708.5V688.48M653.5 708.5V688.33M654.5 708.5V684.09M655.5 708.5V689.58M656.5 708.5V683.71M657.5 708.5V678.07M658.5 708.5V691.08M659.5 708.5V689.6M660.5 708.5V687.79M661.5 708.5V686.95M662.5 708.5V689.69M663.5 708.5V692.16M664.5 708.5V687.73M665.5 708.5V683.34M666.5 708.5V688.38M667.5 708.5V689.29M668.5 708.5V687.58M669.5 708.5V689.92M670.5 708.5V689.18M671.5 708.5V677.31M672.5 708.5V673.97M673.5 708.5V679.44M674.5 708.5V677.3M675.5 708.5V679.78M676.5 708.5V674.02M677.5 708.5V687.56M678.5 708.5V683.97M679.5 708.5V678.31M680.5 708.5V680.8M681.5 708.5V684.79M682.5 708.5V682.76M683.5 708.5V685.12M684.5 708.5V679.56M685.5 708.5V688.37M686.5 708.5V676.95M687.5 708.5V678.38M688.5 708.5V688.88M689.5 708.5V684.69M690.5 708.5V677.61M691.5 708.5V676.15M692.5 708.5V679.96M693.5 708.5V683.95M694.5 708.5V675.96M695.5 708.5V679.22M696.5 708.5V684.12M697.5 708.5V687.98M698.5 708.5V686.46M699.5 708.5V685.84M700.5 708.5V680.15M701.5 708.5V687.72M702.5 708.5V680.72M703.5 708.5V674.22M704.5 708.5V682.76M463.5 708.5V700.8M465.5 708.5V702.2M481.5 708.5V695.9M482.5 708.5V702.9M705.5 707.38V658.17M706.5 702.78V677.31M707.5 696V676.77M708.5 701.65V672.71M709.5 706.88V657.71M710.5 705.53V655.97M711.5 707.4V656.69M712.5 706.08V674.38M713.5 706.48V675.55M714.5 707.49V696.42M715.5 706.91V686.79M716.5 706.68V684.1M717.5 705.67V656.77M718.5 707.63V658.72M719.5 706.93V655.53M720.5 707.19V657.07M721.5 705.98V668.8M722.5 705.92V666.21M723.5 705.76V683.62M724.5 706.13V664.59M725.5 706.2V668.85M726.5 707.01V657.86M727.5 705.56V688.68M728.5 705.69V673.81M729.5 705.81V662.29M730.5 707.38V660.26M731.5 707.1V684.66M732.5 707.06V676.38M733.5 707.65V676.39M734.5 707.21V696.11M735.5 707.2V659.19M736.5 707.21V673.55M737.5 706.64V665.25M738.5 708.11V669.2M739.5 708.13V667.71M740.5 705.68V677.64M741.5 708.11V679.62M742.5 706.87V683.81M743.5 705.6V675.21M744.5 705.61V660.4M745.5 705.22V673.73M746.5 703.95V681.44M747.5 705.33V659.32M748.5 701.91V666.88M749.5 698.91V694.87M750.5 701.37V695.02M751.5 702.87V657.89M752.5 706.24V669.61M753.5 708.03V671.22M754.5 705.73V691.79M755.5 707.63V663.36M756.5 708.2V658.87M757.5 705.57V692.28M758.5 706.03V666.85M759.5 707.02V657.8M760.5 706.02V669.44M761.5 706.52V695.52M762.5 705.51V671.44M763.5 706.24V673.16M764.5 707.14V680.61M765.5 706.81V672.66M766.5 706.85V683.88M767.5 707.07V696.62M768.5 706.12V672.72M769.5 705.52V655.78M770.5 706.99V657.98M771.5 704.94V668.51M772.5 702.98V684.23M773.5 698.6V670.06M774.5 697.82V656.02M775.5 693.07V655.69M776.5 699.42V663.48M777.5 703.05V687.59M778.5 708.26V688.92M779.5 707.99V673.01M780.5 708.21V674.71M781.5 707.39V688.03M782.5 706.14V663.67M783.5 706.25V667.29M784.5 705.94V671.11M785.5 704.56V686.07M786.5 703.35V677.07M787.5 703.63V687.82M788.5 703.23V671.2M789.5 700.3V656.89M790.5 701.17V674.14M791.5 704.62V670.04M792.5 705.02V677.23M793.5 707.9V661.52M794.5 706.62V689.5M795.5 708.01V680.24M796.5 707.33V657.69M797.5 705.86V658.9M798.5 708.2V655.94M799.5 706.73V660.85M800.5 703.93V674.57M801.5 699.96V665.54M802.5 699.58V661.6M803.5 697.55V672.48M804.5 703.24V666.84M805.5 703.96V688.56M806.5 705.91V686.64M807.5 706.01V683.03M808.5 705.02V675.67M809.5 701.93V658.83M810.5 701.05V676.44M811.5 700.84V677.83M812.5 698.19V664.88M815.5 695.08V673.3M816.5 688.02V673.9M817.5 693.27V663.02M818.5 694.8V673.27M819.5 701.7V663.23M820.5 703.42V661.33M821.5 705.62V666.29M822.5 706.86V671.99M823.5 705.53V677.73M824.5 707.64V669.76M825.5 706.24V656.45M826.5 707.28V672.2M827.5 706.28V678.78M828.5 706.4V671.11M829.5 705.74V678.2M830.5 704.95V675.61M831.5 706.88V676.1M832.5 706.71V673.43M833.5 707.4V681.39M834.5 707.12V661.75M835.5 707.92V672.59M836.5 707.14V674.79M837.5 706.92V689.03M838.5 706.15V670.03M839.5 704.86V676.47M840.5 701.68V675.92M841.5 699.06V696.12M843.5 693.67V670.92M844.5 695.93V668.95M845.5 698.6V665.3M846.5 703.48V675.87M847.5 706.72V671.14M848.5 706.49V664.16M849.5 707.72V680.03M850.5 706.83V680.53M851.5 705.72V656.99M852.5 707.24V662.74M853.5 705.6V681.63M854.5 706.06V669.77M855.5 704.84V666.32M856.5 705.67V673.79M857.5 705.01V672.73M858.5 706.08V687.02M859.5 707.21V662.02M860.5 706.61V679.23M861.5 708.12V689.85M862.5 708.17V666.33M863.5 706.05V681.91M864.5 708.14V689.1M865.5 706.42V687.49M866.5 706V683.6M867.5 706.7V686.04M868.5 706.93V694.26M869.5 707.99V690.58M870.5 706.81V701.9M871.5 706.18V701.59M872.5 705.69V673.66M873.5 708.4V674.25M874.5 707.87V663.76M875.5 706.5V694.13M876.5 705.73V691.54M877.5 707.54V695.58M878.5 708.5V704.09M879.5 708.5V704.15M880.5 708.5V702.09M881.5 708.5V698.27M882.5 708.5V696.09M883.5 708.5V697.85M884.5 708.5V696.61M885.5 708.5V695M886.5 708.5V696.25M887.5 708.5V700.85M888.5 708.5V666.53M889.5 708.5V680M890.5 708.5V701.52M891.5 708.5V705.37M892.5 708.5V703.71M893.5 708.5V703.3M894.5 708.5V702.71M895.5 708.5V702.32M896.5 708.5V703.31M897.5 708.5V703.31M898.5 708.5V702.18M899.5 708.5V700.58M900.5 708.5V700.88M901.5 708.5V700.47M902.5 708.5V703.05M903.5 708.5V703.92M904.5 708.5V703.13M905.5 708.5V703.96M906.5 708.5V705.67M907.5 708.5V693.6M908.5 708.5V684.37M909.5 708.5V692.54M910.5 708.5V703.74M911.5 708.5V704.31M912.5 708.5V704.68M913.5 708.5V694.89M914.5 708.5V684.68M915.5 708.5V698.03M916.5 708.5V703.47M917.5 708.5V703.32M918.5 708.5V705.59M919.5 708.5V703.48M920.5 708.5V704.24M921.5 708.5V703.61M922.5 708.5V702.52M923.5 708.5V700.83M924.5 708.5V698.81M925.5 708.5V701.33M926.5 708.5V702.88M927.5 708.5V704.24M928.5 708.5V702.61M929.5 708.5V699.7M930.5 708.5V700.31M931.5 708.5V700.54M932.5 708.5V702.54M933.5 708.5V703.67M934.5 708.5V704.32M935.5 708.5V705.35M936.5 708.5V704.69M937.5 708.5V702.6M938.5 708.5V703.52M939.5 708.5V701.14M940.5 708.5V701.06M941.5 708.5V701.06M942.5 708.5V702.68M943.5 708.5V702.34M944.5 708.5V702.74M945.5 708.5V700.85M946.5 708.5V696.6M947.5 708.5V697.62M948.5 708.5V696.96M949.5 708.5V700.48M950.5 708.5V704.05M951.5 708.5V703.05M952.5 708.5V701.89M953.5 708.5V699.71M954.5 708.5V701.28M955.5 708.5V703.24M956.5 708.5V703.05M957.5 708.5V699.51M958.5 708.5V695.5M959.5 708.5V690.33M960.5 708.5V683.36M961.5 708.5V681.53M962.5 708.5V678.84M963.5 708.5V682.85M964.5 708.5V685.87M965.5 708.5V679.23M966.5 708.5V682.28M967.5 708.5V692.33M968.5 708.5V698.04M969.5 708.5V703.57M970.5 708.5V704.56M971.5 708.5V702.28M972.5 708.5V704.85M973.5 708.5V704.74M974.5 708.5V703.54M975.5 708.5V704.2M976.5 708.5V703.52M977.5 708.5V703.99M978.5 708.5V699.51M979.5 708.5V691.77M980.5 708.5V685.68M981.5 708.5V686.89M982.5 708.5V679.55M983.5 708.5V676.08M984.5 708.5V671.7M985.5 708.5V676.25M986.5 708.5V662.99M987.5 708.5V664.52M988.5 708.5V691.04M989.5 708.5V687.84M990.5 708.5V691.25M991.5 708.5V684.07M992.5 708.5V669.76M993.5 708.5V676.47M994.5 708.5V691.38M995.5 708.5V694.93M996.5 708.5V685.51M997.5 708.5V694.01M998.5 708.5V698.25M999.5 708.5V693.06M1000.5 708.5V693.39M1001.5 708.5V690.9M1002.5 708.5V697.56M1003.5 708.5V692.65M1004.5 708.5V690.08M1005.5 708.5V658.76M1006.5 708.5V673.09M1007.5 708.5V671.85M1008.5 708.5V660.41M1009.5 708.5V683.94M1010.5 708.5V695.96M1011.5 708.5V691.7M1012.5 708.5V689.06M1013.5 708.5V673.6M1014.5 708.5V689.41M1015.5 708.5V695.62M1016.5 708.5V698.38M1017.5 708.5V688.73M1018.5 708.5V658.62M1019.5 708.5V659M1020.5 708.5V662.12M1021.5 708.5V676.83M1022.5 708.5V675.46M1023.5 708.5V667.36M1024.5 708.5V688.99M1025.5 708.5V691.46M1026.5 708.5V663.95M1027.5 708.5V669.9M1028.5 708.5V662.89M1029.5 708.5V670.85M1030.5 708.5V673.25M1031.5 708.5V688.13M1032.5 708.5V673.76M1033.5 708.5V665.53M1034.5 708.5V672.54M1035.5 708.5V687.41M1036.5 708.5V671.92M1037.5 708.5V664.63M1038.5 708.5V690.56M1039.5 708.5V692.02M1040.5 708.5V696.69M1041.5 708.5V699.85" stroke="#2323b8" stroke-width="1" fill="none"/>
<path d="M1040.5 708V720M187.5 704V710M178.5 705V710" stroke="#2020a8" stroke-width="1" fill="none"/>
<path d="M4 931.5H176.5L177.5 926V896L178.5 895.5H1751" stroke="#00e2a0" stroke-width="1.3" fill="none"/>
<path d="M186.5 893V903M187.5 895V909M188.5 895V901M229.5 892V899M1040.5 879V921M1041.5 888V905M1056.5 893V898M1064.5 890V901" stroke="#0eb585" stroke-width="1" fill="none"/>
<path d="M4 114.5H178" stroke="#fdf531" stroke-width="1.6" fill="none"/>
<path d="M177.5 65V96M178.5 65V96" stroke="#8f7e10" stroke-width="1" fill="none"/>
<path d="M177.5 96V167M178.5 96V167" stroke="#cdbd18" stroke-width="1" fill="none"/>
<path d="M186.5 58V156" stroke="#a89510" stroke-width="1" fill="none"/>
<path d="M177.5 100V118M178.5 96V121M179.5 104V119M180.5 110V118M181.5 112V117M182.5 111V118M183.5 108V119M184.5 100V122" stroke="#fff01e" stroke-width="1" fill="none"/>
<path d="M185.5 86V128M186.5 78V135M187.5 77V134M188.5 84V126M189.5 92V118" stroke="#fff01e" stroke-width="1" fill="none"/>
<path d="M189 94 190 89 191 86 193 81 195 76 197 72 200 67 203 62 205 58.5 208 53" stroke="#fff01e" stroke-width="1.5" fill="none" stroke-linejoin="round"/>
<path d="M421.5 54v2M433 54l1 3l1-3" stroke="#fff01e" stroke-width="1.3" fill="none"/>
<path d="M782.5 52.9 783.75 55.45 785 53.98 786.25 54.93 787.5 53.65 788.75 54.08 790 53.68 791.25 57.01 792.5 54.73 793.75 55.49 795 54.76 796.25 55.9 797.5 57.91 798.75 56.37 800 55.57 801.25 57.42 802.5 58.57 803.75 58.14 805 57.58 806.25 60.24 807.5 59.88 808.75 61.93 810 62.66 811.25 61.91 812.5 62.9 813.75 63.3 815 61.15 816.25 63.04 817.5 63.72 818.75 63.86 820 63.29 821.25 63.93 822.5 64.23 823.75 64.4 825 62.48 826.25 65.15 827.5 64.9 828.75 62.32 830 63.12 831.25 62.72 832.5 64.53 833.75 63.55 835 64.88 836.25 64.9 837.5 66 838.75 65.41 840 65.04 841.25 64.98 842.5 68.37 843.75 65.31 845 64.9 846.25 61.68 847.5 60.38 848.75 60.67 850 61.18 851.25 62.39 852.5 60.36 853.75 62.67 855 63.21 856.25 61.41 857.5 62.3 858.75 60.88 860 63.08 861.25 63.96 862.5 64.54 863.75 64.24 865 63.76 866.25 63.57 867.5 65 868.75 66.13 870 64.6 871.25 66.03 872.5 68.3 873.75 67.89 875 69.42 876.25 66.48 877.5 67.61 878.75 66.5 880 67.64 881.25 68.55 882.5 67.21 883.75 68.1 885 67.23 886.25 65.13 887.5 67.04 888.75 66.3 890 66.07 891.25 67.06 892.5 64.56 893.75 66.88 895 67.33 896.25 64.59 897.5 66.71 898.75 66.62 900 66.56 901.25 66.31 902.5 65.68 903.75 67.31 905 68.6 906.25 68.5 907.5 66.05 908.75 68.12 910 67.49 911.25 69.03 912.5 68.46 913.75 66.72 915 66 916.25 64.9 917.5 65.96 918.75 64.77 920 66.53 921.25 65.34 922.5 65.02 923.75 63.86 925 64.24 926.25 64.7 927.5 64.85 928.75 64.95 930 65.91 931.25 66.9 932.5 67.04 933.75 66.97 935 67.52 936.25 66.16 937.5 67.52 938.75 68.54 940 66.54 941.25 68.89 942.5 69.91 943.75 70.28 945 70.42 946.25 68.38 947.5 68.51 948.75 67.91 950 68.01 951.25 70.35 952.5 70.02 953.75 68.82 955 71.44 956.25 72.13 957.5 71.71 958.75 71.2 960 71.28 961.25 70.58 962.5 71.58 963.75 74.37 965 74.19 966.25 70.87 967.5 72.22 968.75 68.37 970 67.93 971.25 67.57 972.5 65.9 973.75 69.07 975 69.98 976.25 70.93 977.5 71.38 978.75 72.48 980 74.44 981.25 75.04 982.5 75.58 983.75 77.7 985 75.32 986.25 75.44 987.5 74.38 988.75 73.84 990 70.41 991.25 70.16 992.5 69.09 993.75 68.05 995 67.27 996.25 66.44 997.5 68.37 998.75 65.97 1000 69.11 1001.25 67.95 1002.5 69.17 1003.75 70.08 1005 69.99 1006.25 70.38 1007.5 68.37 1008.75 66.51 1010 66.88 1011.25 66.37 1012.5 65.86 1013.75 65.8 1015 66.27 1016.25 61.01 1017.5 60.67 1018.75 61.71 1020 62.84 1021.25 63.26 1022.5 62.08 1023.75 63.44 1025 64.04 1026.25 66.25 1027.5 65.5 1028.75 68.72 1030 65.04 1031.25 66.16 1032.5 62.06 1033.75 61.85 1035 58 1036.25 54.67 1037.5 54 1038.75 65.25 1038.8 66" stroke="#fff01e" stroke-width="2" fill="none" stroke-linejoin="round"/>
<path d="M1064.5 54V75" stroke="#c4b014" stroke-width="1" fill="none"/>
<path d="M1067 54.25 1069 58.07 1071 63.43 1073 68.48 1075 72.86 1077 76.88 1079 80.62 1081 83.62 1083 85.88 1085 87.86 1087 89.5 1089 90.67 1091 91.56 1093 92.18 1095 92.55 1097 92.88 1099 93.02 1101 93.05 1103 93.07 1105 93.1 1107 93.13 1109 93.15 1111 93.18 1113 93.21 1115 93.23 1117 93.26 1119 93.3 1121 93.35 1123 93.42 1125 93.5 1127 93.58 1129 93.66 1131 93.74 1133 93.82 1135 93.9 1137 93.98 1139 94.06 1141 94.14 1143 94.3 1145 94.79 1147 95.62 1149 96.78 1151 98.06 1153 99.4 1155 100.71 1157 101.66 1159 102.16 1161 102.23 1163 102.04 1165 101.82 1167 101.54 1169 101.24 1171 100.93 1173 100.63 1175 100.32 1177 100.02 1179 99.71 1181 99.41 1183 99.12 1185 98.91 1187 98.78 1189 98.72 1191 98.68 1193 98.64 1195 98.6 1197 98.56 1199 98.52 1201 98.48 1203 98.44 1205 98.4 1207 98.36 1209 98.32 1211 98.28 1213 98.35 1215 98.87 1217 99.83 1219 101.17 1221 102.53 1223 103.71 1225 104.49 1227 104.91 1229 104.92 1231 104.72 1233 104.42 1235 104.03 1237 103.64 1239 103.25 1241 102.86 1243 102.47 1245 102.08 1247 101.73 1249 101.44 1251 101.2 1253 101 1255 100.8 1257 100.6 1259 100.4 1261 100.2 1263 100.01 1265 99.89 1267 99.81 1269 99.8 1271 99.8 1273 99.8 1275 99.8 1277 99.8 1279 99.8 1281 99.8 1283 99.96 1285 100.52 1287 101.48 1289 102.82 1291 104.25 1293 105.47 1295 106.23 1297 106.53 1299 106.41 1301 106.18 1303 105.89 1305 105.55 1307 105.17 1309 104.8 1311 104.43 1313 104.05 1315 103.68 1317 103.31 1319 102.93 1321 102.56 1323 102.25 1325 102.04 1327 101.91 1329 101.84 1331 101.78 1333 101.72 1335 101.66 1337 101.59 1339 101.54 1341 101.51 1343 101.5 1345 101.5 1347 101.5 1349 101.5 1351 101.5 1353 101.61 1355 102.14 1357 103.1 1359 104.46 1361 105.84 1363 106.84 1365 107.42 1367 107.58 1369 107.45 1371 107.23 1373 106.91 1375 106.57 1377 106.23 1379 105.89 1381 105.54 1383 105.2 1385 104.86 1387 104.51 1389 103.96 1391 103.12 1393 102 1395 100.73 1397 99.54 1399 98.49 1401 97.81 1403 97.45 1405 97.42 1407 97.55 1409 97.69 1411 97.88 1413 98.12 1415 98.42 1417 98.73 1419 99.04 1421 99.35 1423 99.66 1425 99.97 1427 100.28 1429 100.59 1431 100.9 1433 101.21 1435 101.52 1437 101.83 1439 102.14 1441 102.39 1443 102.56 1445 102.65 1447 102.68 1449 102.71 1451 102.75 1453 102.78 1455 102.81 1457 102.84 1459 102.71 1461 102.26 1463 101.54 1465 100.64 1467 99.81 1469 99.19 1471 98.8 1473 98.62 1475 98.6 1477 98.64 1479 98.78 1481 99.02 1483 99.35 1485 99.7 1487 100.05 1489 100.4 1491 100.75 1493 101.1 1495 101.45 1497 101.8 1499 102.15 1501 102.5 1503 102.85 1505 103.2 1507 103.54 1509 103.8 1511 103.97 1513 104.05 1515 104.08 1517 104.11 1519 104.14 1521 104.17 1523 104.2 1525 104.23 1527 104.22 1529 103.96 1531 103.45 1533 102.69 1535 101.87 1537 101.1 1539 100.46 1541 100.04 1543 99.83 1545 99.81 1547 99.92 1549 100.15 1551 100.48 1553 100.89 1555 101.29 1557 101.69 1559 102.09 1561 102.43 1563 102.48 1565 102.26 1567 101.78 1569 101.26 1571 100.79 1573 100.38 1575 100.15 1577 100.14 1579 100.33 1581 100.65 1583 100.98 1585 101.29 1587 101.6 1589 101.91 1591 102.21 1593 102.52 1595 102.82 1597 103.13 1599 103.43 1601 103.73 1603 104.04 1605 104.34 1607 104.6 1609 104.79 1611 104.92 1613 105.01 1615 105.09 1617 105.17 1619 105.26 1621 105.34 1623 105.42 1625 105.5 1627 105.59 1629 105.67 1631 105.75 1633 105.84 1635 105.92 1637 106 1639 106.08 1641 106.15 1643 106.21 1645 106.25 1647 106.28 1649 106.32 1651 106.35 1653 106.38 1655 106.41 1657 106.44 1659 106.48 1661 106.51 1663 106.54 1665 106.57 1667 106.6 1669 106.64 1671 106.67 1673 106.7 1675 106.73 1677 106.76 1679 106.8 1681 106.83 1683 106.86 1685 106.89 1687 106.92 1689 106.96 1691 106.99 1693 107.02 1695 107.05 1697 107.08 1699 107.11 1701 107.15 1703 107.18 1705 107.21 1707 107.24 1709 107.27 1711 107.3 1713 107.33 1715 107.36 1717 107.39 1719 107.42 1721 107.45 1723 107.48 1725 107.51 1727 107.54 1729 107.57 1731 107.6 1733 107.63 1735 107.66 1737 107.69 1739 107.72 1741 107.75 1743 107.78 1745 107.81 1747 107.84 1749 107.86 1751 107.88" stroke="#fff01e" stroke-width="1.7" fill="none" stroke-linejoin="round"/>
</g>
<text x="53.5" y="116.6" font-size="17.4" fill="#fdf531">LYSO-6</text>
<text x="53.5" y="233.6" font-size="17.4" fill="#27d8e2">LYSO-7</text>
<text x="53.5" y="350.6" font-size="17.4" fill="#ef4060">CeBr-a</text>
<text x="53.5" y="467.6" font-size="17.4" fill="#90d22f">CebR-b</text>
<text x="53.5" y="584.6" font-size="17.4" fill="#fd9e30">LYSO-3</text>
<text x="53.5" y="701.6" font-size="17.4" fill="#2d2dd6">LYSO-1</text>
<text x="53.5" y="818.6" font-size="17.4" fill="#f458b8">LYSO-5</text>
<text x="53.5" y="936.7" font-size="17.4" fill="#00e2a0">Trigger</text>
<text x="1745.3" y="95.4" font-size="12" fill="#fdf531" text-anchor="end">2 V</text>
<text x="1745.3" y="118.8" font-size="12" fill="#fdf531" text-anchor="end">0 V</text>
<text x="1745.3" y="142.2" font-size="12" fill="#fdf531" text-anchor="end">-2 V</text>
<text x="1745.3" y="165.6" font-size="12" fill="#fdf531" text-anchor="end">-4 V</text>
<text x="1745.3" y="187" font-size="12" fill="#27d8e2" text-anchor="end">1 V</text>
<text x="1745.3" y="210.2" font-size="12" fill="#27d8e2" text-anchor="end">600 mV</text>
<text x="1745.3" y="233.4" font-size="12" fill="#27d8e2" text-anchor="end">200 mV</text>
<text x="1745.3" y="256.6" font-size="12" fill="#27d8e2" text-anchor="end">-200 mV</text>
<text x="1745.3" y="279.8" font-size="12" fill="#27d8e2" text-anchor="end">-600 mV</text>
<text x="1745.3" y="304" font-size="12" fill="#ef4060" text-anchor="end">150 mV</text>
<text x="1745.3" y="327.2" font-size="12" fill="#ef4060" text-anchor="end">50 mV</text>
<text x="1745.3" y="350.4" font-size="12" fill="#ef4060" text-anchor="end">-50 mV</text>
<text x="1745.3" y="373.6" font-size="12" fill="#ef4060" text-anchor="end">-150 mV</text>
<text x="1745.3" y="396.8" font-size="12" fill="#ef4060" text-anchor="end">-250 mV</text>
<text x="1745.3" y="421" font-size="12" fill="#90d22f" text-anchor="end">0 V</text>
<text x="1745.3" y="444.2" font-size="12" fill="#90d22f" text-anchor="end">-100 mV</text>
<text x="1745.3" y="467.4" font-size="12" fill="#90d22f" text-anchor="end">-200 mV</text>
<text x="1745.3" y="490.6" font-size="12" fill="#90d22f" text-anchor="end">-300 mV</text>
<text x="1745.3" y="513.8" font-size="12" fill="#90d22f" text-anchor="end">-400 mV</text>
<text x="1745.3" y="538" font-size="12" fill="#fd9e30" text-anchor="end">1 V</text>
<text x="1745.3" y="561.2" font-size="12" fill="#fd9e30" text-anchor="end">600 mV</text>
<text x="1745.3" y="584.4" font-size="12" fill="#fd9e30" text-anchor="end">200 mV</text>
<text x="1745.3" y="607.6" font-size="12" fill="#fd9e30" text-anchor="end">-200 mV</text>
<text x="1745.3" y="630.8" font-size="12" fill="#fd9e30" text-anchor="end">-600 mV</text>
<text x="1745.3" y="655" font-size="12" fill="#2d2dd6" text-anchor="end">1 V</text>
<text x="1745.3" y="678.2" font-size="12" fill="#2d2dd6" text-anchor="end">600 mV</text>
<text x="1745.3" y="701.4" font-size="12" fill="#2d2dd6" text-anchor="end">200 mV</text>
<text x="1745.3" y="724.6" font-size="12" fill="#2d2dd6" text-anchor="end">-200 mV</text>
<text x="1745.3" y="747.8" font-size="12" fill="#2d2dd6" text-anchor="end">-600 mV</text>
<text x="1745.3" y="772" font-size="12" fill="#f458b8" text-anchor="end">1 V</text>
<text x="1745.3" y="795.2" font-size="12" fill="#f458b8" text-anchor="end">600 mV</text>
<text x="1745.3" y="818.4" font-size="12" fill="#f458b8" text-anchor="end">200 mV</text>
<text x="1745.3" y="841.6" font-size="12" fill="#f458b8" text-anchor="end">-200 mV</text>
<text x="1745.3" y="864.8" font-size="12" fill="#f458b8" text-anchor="end">-600 mV</text>
<text x="1745.3" y="889.3" font-size="12" fill="#00e2a0" text-anchor="end">8 V</text>
<text x="1745.3" y="913.3" font-size="12" fill="#00e2a0" text-anchor="end">4 V</text>
<text x="1745.3" y="937.3" font-size="12" fill="#00e2a0" text-anchor="end">0 V</text>
<text x="1745.3" y="961.3" font-size="12" fill="#00e2a0" text-anchor="end">-4 V</text>
<text x="1745.3" y="985.3" font-size="12" fill="#00e2a0" text-anchor="end">-8 V</text>
<text x="178" y="986" font-size="12" fill="#b9b9b9" text-anchor="middle">0 s</text>
<text x="352.75" y="986" font-size="12" fill="#b9b9b9" text-anchor="middle">5 ms</text>
<text x="527.5" y="986" font-size="12" fill="#b9b9b9" text-anchor="middle">10 ms</text>
<text x="702.25" y="986" font-size="12" fill="#b9b9b9" text-anchor="middle">15 ms</text>
<text x="877" y="986" font-size="12" fill="#b9b9b9" text-anchor="middle">20 ms</text>
<text x="1051.75" y="986" font-size="12" fill="#b9b9b9" text-anchor="middle">25 ms</text>
<text x="1226.5" y="986" font-size="12" fill="#b9b9b9" text-anchor="middle">30 ms</text>
<text x="1401.25" y="986" font-size="12" fill="#b9b9b9" text-anchor="middle">35 ms</text>
<text x="1576" y="986" font-size="12" fill="#b9b9b9" text-anchor="middle">40 ms</text>
<g>
<use href="#dr" y="56"/>
<use href="#dr" y="68"/>
<use href="#dr" y="79"/>
<use href="#dr" y="91"/>
<use href="#dr" y="103"/>
<use href="#dr" y="114"/>
<use href="#dr" y="126"/>
<use href="#dr" y="138"/>
<use href="#dr" y="149"/>
<use href="#dr" y="161"/>
<use href="#dr" y="171"/>
<use href="#dr" y="183"/>
<use href="#dr" y="194"/>
<use href="#dr" y="206"/>
<use href="#dr" y="217"/>
<use href="#dr" y="229"/>
<use href="#dr" y="241"/>
<use href="#dr" y="252"/>
<use href="#dr" y="264"/>
<use href="#dr" y="275"/>
<use href="#dr" y="288"/>
<use href="#dr" y="300"/>
<use href="#dr" y="311"/>
<use href="#dr" y="323"/>
<use href="#dr" y="334"/>
<use href="#dr" y="346"/>
<use href="#dr" y="358"/>
<use href="#dr" y="369"/>
<use href="#dr" y="381"/>
<use href="#dr" y="392"/>
<use href="#dr" y="405"/>
<use href="#dr" y="417"/>
<use href="#dr" y="428"/>
<use href="#dr" y="440"/>
<use href="#dr" y="451"/>
<use href="#dr" y="463"/>
<use href="#dr" y="475"/>
<use href="#dr" y="486"/>
<use href="#dr" y="498"/>
<use href="#dr" y="509"/>
<use href="#dr" y="522"/>
<use href="#dr" y="534"/>
<use href="#dr" y="545"/>
<use href="#dr" y="557"/>
<use href="#dr" y="568"/>
<use href="#dr" y="580"/>
<use href="#dr" y="592"/>
<use href="#dr" y="603"/>
<use href="#dr" y="615"/>
<use href="#dr" y="626"/>
<use href="#dr" y="639"/>
<use href="#dr" y="651"/>
<use href="#dr" y="662"/>
<use href="#dr" y="674"/>
<use href="#dr" y="685"/>
<use href="#dr" y="697"/>
<use href="#dr" y="709"/>
<use href="#dr" y="720"/>
<use href="#dr" y="732"/>
<use href="#dr" y="743"/>
<use href="#dr" y="756"/>
<use href="#dr" y="768"/>
<use href="#dr" y="779"/>
<use href="#dr" y="791"/>
<use href="#dr" y="802"/>
<use href="#dr" y="814"/>
<use href="#dr" y="826"/>
<use href="#dr" y="837"/>
<use href="#dr" y="849"/>
<use href="#dr" y="860"/>
<use href="#dr" y="873"/>
<use href="#dr" y="885"/>
<use href="#dr" y="897"/>
<use href="#dr" y="909"/>
<use href="#dr" y="921"/>
<use href="#dr" y="933"/>
<use href="#dr" y="945"/>
<use href="#dr" y="957"/>
<use href="#dr" y="969"/>
<use href="#dr" y="981"/>
</g>
<defs><path id="mv" d="M.5 56v1m0 1v1m0 1v1m0 2v1m0 1v1m0 2v1m0 1v1m0 1v1m0 2v1m0 1v1m0 1v1m0 2v1m0 1v1m0 1v1m0 2v1m0 1v1m0 1v1m0 2v1m0 1v1m0 1v1m0 2v1m0 1v1m0 1v1m0 2v1m0 1v1m0 1v1m0 2v1m0 1v1m0 1v1m0 2v1m0 1v1m0 1v1m0 2v1m0 1v1m0 1v1m0 2v1m0 1v1m0 1v1m0 2v1m0 1v1m0 1v1m0 2v1m0 1v1m0 1v1m0 2v1m0 1v1m0 1v1m0 2v1m0 1v1m0 1v1m0 0v1m0 1v1m0 2v1m0 1v1m0 1v1m0 2v1m0 1v1m0 1v1m0 1v1m0 2v1m0 1v1m0 1v1m0 2v1m0 1v1m0 1v1m0 2v1m0 1v1m0 1v1m0 2v1m0 1v1m0 1v1m0 2v1m0 1v1m0 1v1m0 2v1m0 1v1m0 1v1m0 2v1m0 1v1m0 1v1m0 1v1m0 2v1m0 1v1m0 1v1m0 2v1m0 1v1m0 1v1m0 2v1m0 1v1m0 1v1m0 2v1m0 1v1m0 1v1m0 2v1m0 1v1m0 1v1m0 2v1m0 1v1m0 1v1m0 2v1m0 2v1m0 1v1m0 2v1m0 1v1m0 1v1m0 2v1m0 1v1m0 1v1m0 1v1m0 2v1m0 1v1m0 1v1m0 2v1m0 1v1m0 1v1m0 2v1m0 1v1m0 1v1m0 2v1m0 1v1m0 1v1m0 2v1m0 1v1m0 1v1m0 2v1m0 1v1m0 1v1m0 2v1m0 1v1m0 1v1m0 2v1m0 1v1m0 1v1m0 1v1m0 2v1m0 1v1m0 1v1m0 2v1m0 1v1m0 1v1m0 2v1m0 1v1m0 1v1m0 2v1m0 1v1m0 1v1m0 2v1m0 1v1m0 1v1m0 2v1m0 2v1m0 1v1m0 2v1m0 1v1m0 1v1m0 2v1m0 1v1m0 1v1m0 1v1m0 2v1m0 1v1m0 1v1m0 2v1m0 1v1m0 1v1m0 2v1m0 1v1m0 1v1m0 2v1m0 1v1m0 1v1m0 2v1m0 1v1m0 1v1m0 2v1m0 1v1m0 1v1m0 2v1m0 1v1m0 1v1m0 2v1m0 1v1m0 1v1m0 1v1m0 2v1m0 1v1m0 1v1m0 2v1m0 1v1m0 1v1m0 2v1m0 1v1m0 1v1m0 2v1m0 1v1m0 1v1m0 2v1m0 1v1m0 1v1m0 2v1m0 2v1m0 1v1m0 2v1m0 1v1m0 1v1m0 2v1m0 1v1m0 1v1m0 1v1m0 2v1m0 1v1m0 1v1m0 2v1m0 1v1m0 1v1m0 2v1m0 1v1m0 1v1m0 2v1m0 1v1m0 1v1m0 2v1m0 1v1m0 1v1m0 2v1m0 1v1m0 1v1m0 2v1m0 1v1m0 1v1m0 2v1m0 1v1m0 1v1m0 1v1m0 2v1m0 1v1m0 1v1m0 2v1m0 1v1m0 1v1m0 2v1m0 1v1m0 1v1m0 2v1m0 1v1m0 1v1m0 2v1m0 1v1m0 1v1m0 2v1m0 2v1m0 1v1m0 2v1m0 1v1m0 1v1m0 2v1m0 1v1m0 1v1m0 1v1m0 2v1m0 1v1m0 1v1m0 2v1m0 1v1m0 1v1m0 2v1m0 1v1m0 1v1m0 2v1m0 1v1m0 1v1m0 2v1m0 1v1m0 1v1m0 2v1m0 1v1m0 1v1m0 2v1m0 1v1m0 1v1m0 2v1m0 1v1m0 1v1m0 1v1m0 2v1m0 1v1m0 1v1m0 2v1m0 1v1m0 1v1m0 2v1m0 1v1m0 1v1m0 2v1m0 1v1m0 1v1m0 2v1m0 1v1m0 1v1m0 2v1m0 2v1m0 1v1m0 2v1m0 1v1m0 1v1m0 2v1m0 1v1m0 1v1m0 1v1m0 2v1m0 1v1m0 1v1m0 2v1m0 1v1m0 1v1m0 2v1m0 1v1m0 1v1m0 2v1m0 1v1m0 1v1m0 2v1m0 1v1m0 1v1m0 2v1m0 1v1m0 1v1m0 2v1m0 1v1m0 1v1m0 2v1m0 1v1m0 1v1m0 1v1m0 2v1m0 1v1m0 1v1m0 2v1m0 1v1m0 1v1m0 2v1m0 1v1m0 1v1m0 2v1m0 1v1m0 1v1m0 2v1m0 1v1m0 1v1m0 2v1m0 2v1m0 1v1m0 2v1m0 1v1m0 1v1m0 2v1m0 1v1m0 2v1m0 1v1m0 1v1m0 2v1m0 1v1m0 2v1m0 1v1m0 1v1m0 2v1m0 1v1m0 2v1m0 1v1m0 1v1m0 2v1m0 1v1m0 2v1m0 1v1m0 1v1m0 2v1m0 1v1m0 2v1m0 1v1m0 1v1m0 2v1m0 1v1m0 2v1m0 1v1m0 1v1m0 2v1m0 1v1m0 2v1m0 1v1m0 1v1m0 2v1m0 1v1m0 2v1m0 1v1m0 1v1m0 2v1m0 1v1" stroke="#c6c6c6" stroke-width="1" fill="none" shape-rendering="crispEdges"/></defs>
<use href="#mv" x="3"/>
<use href="#mv" x="353"/>
<use href="#mv" x="528"/>
<use href="#mv" x="702"/>
<use href="#mv" x="877"/>
<use href="#mv" x="1052"/>
<use href="#mv" x="1227"/>
<use href="#mv" x="1401"/>
<use href="#mv" x="1576"/>
<rect x="3" y="169" width="1748" height="2" fill="#707070"/>
<rect x="3" y="286" width="1748" height="2" fill="#707070"/>
<rect x="3" y="403" width="1748" height="2" fill="#707070"/>
<rect x="3" y="520" width="1748" height="2" fill="#707070"/>
<rect x="3" y="637" width="1748" height="2" fill="#707070"/>
<rect x="3" y="754" width="1748" height="2" fill="#707070"/>
<rect x="3" y="871" width="1748" height="2" fill="#707070"/>
<path d="M178.5 63.3V976" stroke="#c4c4c4" stroke-width="1" stroke-dasharray="6.5 3.5" fill="none" shape-rendering="crispEdges"/>
<path d="M6 826.5H1751" stroke="#cfcfcf" stroke-width="1" stroke-dasharray="5 5" fill="none" shape-rendering="crispEdges"/>
<path d="M6 241.5H1751" stroke="#cdc6c6" stroke-width="1" stroke-dasharray="5 5" fill="none" shape-rendering="crispEdges"/>
<path d="M6 592.5H1751" stroke="#c9ccd0" stroke-width="1" stroke-dasharray="5 5" fill="none" shape-rendering="crispEdges"/>
<path d="M6 334.5H1751" stroke="#d8d0d0" stroke-width="1" stroke-dasharray="5 5" fill="none" shape-rendering="crispEdges"/>
<path d="M6 417.5H1751" stroke="#d9e8bf" stroke-width="1" stroke-dasharray="5 5" fill="none" shape-rendering="crispEdges"/>
<path d="M6 709.5H1751" stroke="#d0d0d8" stroke-width="1" stroke-dasharray="5 5" fill="none" shape-rendering="crispEdges"/>
<path d="M6 933.5H1721" stroke="#c4c4c4" stroke-width="1" stroke-dasharray="5 5" fill="none" shape-rendering="crispEdges"/>
<path d="M6 114.5H1721" stroke="#c4c4c4" stroke-width="1" stroke-dasharray="5 5" fill="none" shape-rendering="crispEdges"/>
<path d="M8.5 99.4H29L41.6 112.15L29 124.9H8.5Q6.5 124.9 6.5 122.9V101.4Q6.5 99.4 8.5 99.4Z" fill="#1a1805" stroke="#fdf531" stroke-width="1.1"/>
<text x="23.6" y="115.45" font-size="12" fill="#fdf531" text-anchor="middle" style="word-spacing:-1.6px">C 1</text>
<path d="M8.5 216.4H29L41.6 229.15L29 241.9H8.5Q6.5 241.9 6.5 239.9V218.4Q6.5 216.4 8.5 216.4Z" fill="#04181b" stroke="#27d8e2" stroke-width="1.1"/>
<text x="23.6" y="232.45" font-size="12" fill="#27d8e2" text-anchor="middle" style="word-spacing:-1.6px">C 2</text>
<path d="M8.5 333.4H29L41.6 346.15L29 358.9H8.5Q6.5 358.9 6.5 356.9V335.4Q6.5 333.4 8.5 333.4Z" fill="#1a080c" stroke="#ef4060" stroke-width="1.1"/>
<text x="23.6" y="349.45" font-size="12" fill="#ef4060" text-anchor="middle" style="word-spacing:-1.6px">C 3</text>
<path d="M8.5 450.4H29L41.6 463.15L29 475.9H8.5Q6.5 475.9 6.5 473.9V452.4Q6.5 450.4 8.5 450.4Z" fill="#0e1605" stroke="#90d22f" stroke-width="1.1"/>
<text x="23.6" y="466.45" font-size="12" fill="#90d22f" text-anchor="middle" style="word-spacing:-1.6px">C 4</text>
<path d="M8.5 567.4H29L41.6 580.15L29 592.9H8.5Q6.5 592.9 6.5 590.9V569.4Q6.5 567.4 8.5 567.4Z" fill="#1c1005" stroke="#fd9e30" stroke-width="1.1"/>
<text x="23.6" y="583.45" font-size="12" fill="#fd9e30" text-anchor="middle" style="word-spacing:-1.6px">C 5</text>
<path d="M8.5 684.4H29L41.6 697.15L29 709.9H8.5Q6.5 709.9 6.5 707.9V686.4Q6.5 684.4 8.5 684.4Z" fill="#05051c" stroke="#2d2dd6" stroke-width="1.1"/>
<text x="23.6" y="700.45" font-size="12" fill="#2d2dd6" text-anchor="middle" style="word-spacing:-1.6px">C 6</text>
<path d="M8.5 801.4H29L41.6 814.15L29 826.9H8.5Q6.5 826.9 6.5 824.9V803.4Q6.5 801.4 8.5 801.4Z" fill="#1a0812" stroke="#f458b8" stroke-width="1.1"/>
<text x="23.6" y="817.45" font-size="12" fill="#f458b8" text-anchor="middle" style="word-spacing:-1.6px">C 7</text>
<path d="M9.3 920.8H29L40.7 932.5L29 944.2H9.3Q7.3 944.2 7.3 942.2V922.8Q7.3 920.8 9.3 920.8Z" fill="#00e2a0" stroke="#00e2a0" stroke-width="0.6"/>
<text x="23.6" y="935.8" font-size="12" fill="#04140e" text-anchor="middle" style="word-spacing:-1.6px">C 8</text>
<path d="M167.8 54h20.4l-10.2 10.2z" fill="#f6861f"/>
<path d="M169.3 874.3h17.6v18.6h-5l-3.8 6.4l-3.8-6.4h-5z" fill="#000" stroke="#f6921f" stroke-width="1.9" stroke-linejoin="miter"/>
<text x="178.1" y="889.3" font-size="13.5" fill="#f6921f" text-anchor="middle" font-weight="bold">T</text>
<path d="M1730 908.6L1742 898.6V907H1751V910.3H1742V918.6Z" fill="#00e2a0"/>
<path d="M1710 61H1745V95Z" fill="#555555"/>
<circle cx="1736" cy="69" r="3.6" fill="none" stroke="#bdbdbd" stroke-width="1.6"/>
<path d="M1733.4 71.6L1727.8 77.2" stroke="#bdbdbd" stroke-width="2.4" stroke-linecap="round"/>
<circle cx="1762" cy="501.7" r="2.1" fill="#c6c6c6"/>
<circle cx="1762" cy="510.3" r="2.1" fill="#c6c6c6"/>
<circle cx="1762" cy="518.9" r="2.1" fill="#c6c6c6"/>
<rect x="1769.5" y="26.5" width="152" height="968" fill="#2f2f2f" stroke="#5c5c5c" stroke-width="1"/>
<text x="1844.7" y="40.8" font-size="15" fill="#f4f4f4" text-anchor="middle" font-weight="bold" style="font-family:'Liberation Sans',sans-serif">Add New...</text>
<rect x="1777" y="53.3" width="63" height="36" rx="6" fill="url(#gb)" stroke="#6e665f" stroke-width="1"/>
<text x="1808.5" y="75.3" font-size="13.7" fill="#f4f4f4" text-anchor="middle">Cursors</text>
<rect x="1849.2" y="53.3" width="63" height="36" rx="6" fill="url(#gb)" stroke="#6e665f" stroke-width="1"/>
<text x="1880.7" y="75.3" font-size="13.7" fill="#f4f4f4" text-anchor="middle">Note</text>
<rect x="1777" y="99.4" width="63" height="36" rx="6" fill="url(#gb)" stroke="#6e665f" stroke-width="1"/>
<text x="1808.5" y="121.4" font-size="13.7" fill="#f4f4f4" text-anchor="middle" textLength="59" lengthAdjust="spacingAndGlyphs">Measure</text>
<rect x="1849.2" y="99.4" width="63" height="36" rx="6" fill="url(#gb)" stroke="#6e665f" stroke-width="1"/>
<text x="1880.7" y="121.4" font-size="13.7" fill="#f4f4f4" text-anchor="middle">Search</text>
<rect x="1777" y="145.4" width="63" height="36" rx="6" fill="url(#gb)" stroke="#6e665f" stroke-width="1"/>
<rect x="1849.2" y="145.4" width="63" height="36" rx="6" fill="url(#gb)" stroke="#6e665f" stroke-width="1"/>
<text x="1880.7" y="167.4" font-size="13.7" fill="#f4f4f4" text-anchor="middle">Plot</text>
<text x="1808.5" y="159.2" font-size="13.7" fill="#f4f4f4" text-anchor="middle">Results</text>
<text x="1808.5" y="175.3" font-size="13.7" fill="#f4f4f4" text-anchor="middle">Table</text>
<rect x="1773" y="190" width="144" height="1" fill="#6a625c"/>
<rect x="1773" y="943" width="144" height="1" fill="#6a625c"/>
<rect x="1776.3" y="952.5" width="62.5" height="36" rx="6" fill="url(#gb)" stroke="#6e665f" stroke-width="1"/>
<rect x="1795.5" y="958.8" width="15" height="14" fill="none" stroke="#c4c4c4" stroke-width="1.7" stroke-dasharray="1.7 2.7"/>
<circle cx="1808.8" cy="972" r="4.6" fill="#8a8a8a" stroke="#d0d0d0" stroke-width="1.5"/>
<path d="M1812.5 975.8L1818.6 981.6" stroke="#d0d0d0" stroke-width="2.6" stroke-linecap="round"/>
<g fill="none" stroke="#cfcfcf" stroke-width="1.4">
<ellipse cx="1882.6" cy="959.6" rx="12.8" ry="4.2"/>
<path d="M1869.8 960.5L1872.6 983.4Q1882.6 988.6 1892.6 983.4L1895.4 960.5"/>
<path d="M1870.3 964.5Q1882.6 969.5 1894.9 964.5"/>
<path d="M1876.6 968V984.5M1882.6 968.6V985.6M1888.6 968V984.5" stroke-width="1.1"/>
<path d="M1878 957.4Q1882.6 955.4 1887.2 957.4" stroke-width="1.2"/>
</g>
<rect x="3" y="999" width="90" height="78.5" rx="4" fill="#cbcbcb"/>
<path d="M3 1018.3V1003Q3 999 7 999H89Q93 999 93 1003V1018.3Z" fill="#4b4a22"/>
<rect x="3" y="1018.3" width="90" height="2.7" fill="url(#gh)"/>
<text x="8.3" y="1012.8" font-size="14.2" fill="#fdf531" style="word-spacing:-1px;letter-spacing:-0.3px">Ch 1</text>
<text x="10.4" y="1035.6" font-size="13.4" fill="#111">1 V/div</text>
<text x="10.4" y="1055.4" font-size="13.5" fill="#111">50 Ω</text>
<text x="10.4" y="1073.5" font-size="13.7" fill="#111">100 MHz</text>
<text x="76.3" y="1067.6" font-size="8.3" fill="#111">B</text>
<text x="81" y="1071.3" font-size="8.3" fill="#111">w</text>
<rect x="98" y="999" width="90" height="78.5" rx="4" fill="#cbcbcb"/>
<path d="M98 1018.3V1003Q98 999 102 999H184Q188 999 188 1003V1018.3Z" fill="#21444a"/>
<rect x="98" y="1018.3" width="90" height="2.7" fill="url(#gh)"/>
<text x="103.3" y="1012.8" font-size="14.2" fill="#27d8e2" style="word-spacing:-1px;letter-spacing:-0.3px">Ch 2</text>
<text x="105.4" y="1035.6" font-size="13.4" fill="#111">200 mV/div</text>
<text x="105.4" y="1055.4" font-size="13.5" fill="#111">50 Ω</text>
<text x="105.4" y="1073.5" font-size="13.7" fill="#111">100 MHz</text>
<text x="171.3" y="1067.6" font-size="8.3" fill="#111">B</text>
<text x="176" y="1071.3" font-size="8.3" fill="#111">w</text>
<rect x="193" y="999" width="90" height="78.5" rx="4" fill="#cbcbcb"/>
<path d="M193 1018.3V1003Q193 999 197 999H279Q283 999 283 1003V1018.3Z" fill="#48252c"/>
<rect x="193" y="1018.3" width="90" height="2.7" fill="url(#gh)"/>
<text x="198.3" y="1012.8" font-size="14.2" fill="#ef4060" style="word-spacing:-1px;letter-spacing:-0.3px">Ch 3</text>
<text x="200.4" y="1035.6" font-size="13.4" fill="#111">50 mV/div</text>
<text x="200.4" y="1055.4" font-size="13.5" fill="#111">50 Ω</text>
<text x="200.4" y="1073.5" font-size="13.7" fill="#111">100 MHz</text>
<text x="266.3" y="1067.6" font-size="8.3" fill="#111">B</text>
<text x="271" y="1071.3" font-size="8.3" fill="#111">w</text>
<rect x="288" y="999" width="90" height="78.5" rx="4" fill="#cbcbcb"/>
<path d="M288 1018.3V1003Q288 999 292 999H374Q378 999 378 1003V1018.3Z" fill="#3a4626"/>
<rect x="288" y="1018.3" width="90" height="2.7" fill="url(#gh)"/>
<text x="293.3" y="1012.8" font-size="14.2" fill="#90d22f" style="word-spacing:-1px;letter-spacing:-0.3px">Ch 4</text>
<text x="295.4" y="1035.6" font-size="13.4" fill="#111">50 mV/div</text>
<text x="295.4" y="1055.4" font-size="13.5" fill="#111">50 Ω</text>
<text x="295.4" y="1073.5" font-size="13.7" fill="#111">100 MHz</text>
<text x="361.3" y="1067.6" font-size="8.3" fill="#111">B</text>
<text x="366" y="1071.3" font-size="8.3" fill="#111">w</text>
<rect x="383" y="999" width="90" height="78.5" rx="4" fill="#cbcbcb"/>
<path d="M383 1018.3V1003Q383 999 387 999H469Q473 999 473 1003V1018.3Z" fill="#503b24"/>
<rect x="383" y="1018.3" width="90" height="2.7" fill="url(#gh)"/>
<text x="388.3" y="1012.8" font-size="14.2" fill="#fd9e30" style="word-spacing:-1px;letter-spacing:-0.3px">Ch 5</text>
<text x="390.4" y="1035.6" font-size="13.4" fill="#111">200 mV/div</text>
<text x="390.4" y="1055.4" font-size="13.5" fill="#111">50 Ω</text>
<text x="390.4" y="1073.5" font-size="13.7" fill="#111">100 MHz</text>
<text x="456.3" y="1067.6" font-size="8.3" fill="#111">B</text>
<text x="461" y="1071.3" font-size="8.3" fill="#111">w</text>
<rect x="478" y="999" width="90" height="78.5" rx="4" fill="#cbcbcb"/>
<path d="M478 1018.3V1003Q478 999 482 999H564Q568 999 568 1003V1018.3Z" fill="#20203e"/>
<rect x="478" y="1018.3" width="90" height="2.7" fill="url(#gh)"/>
<text x="483.3" y="1012.8" font-size="14.2" fill="#2d2dd6" style="word-spacing:-1px;letter-spacing:-0.3px">Ch 6</text>
<text x="485.4" y="1035.6" font-size="13.4" fill="#111">200 mV/div</text>
<text x="485.4" y="1055.4" font-size="13.5" fill="#111">50 Ω</text>
<text x="485.4" y="1073.5" font-size="13.7" fill="#111">100 MHz</text>
<text x="551.3" y="1067.6" font-size="8.3" fill="#111">B</text>
<text x="556" y="1071.3" font-size="8.3" fill="#111">w</text>
<rect x="573" y="999" width="90" height="78.5" rx="4" fill="#cbcbcb"/>
<path d="M573 1018.3V1003Q573 999 577 999H659Q663 999 663 1003V1018.3Z" fill="#47263a"/>
<rect x="573" y="1018.3" width="90" height="2.7" fill="url(#gh)"/>
<text x="578.3" y="1012.8" font-size="14.2" fill="#f458b8" style="word-spacing:-1px;letter-spacing:-0.3px">Ch 7</text>
<text x="580.4" y="1035.6" font-size="13.4" fill="#111">200 mV/div</text>
<text x="580.4" y="1055.4" font-size="13.5" fill="#111">50 Ω</text>
<text x="580.4" y="1073.5" font-size="13.7" fill="#111">100 MHz</text>
<text x="646.3" y="1067.6" font-size="8.3" fill="#111">B</text>
<text x="651" y="1071.3" font-size="8.3" fill="#111">w</text>
<rect x="668" y="999" width="90" height="78.5" rx="4" fill="#cbcbcb"/>
<path d="M668 1018.3V1003Q668 999 672 999H754Q758 999 758 1003V1018.3Z" fill="#00e0a0"/>
<rect x="668" y="1018.3" width="90" height="2.7" fill="url(#gh)"/>
<text x="673.3" y="1012.8" font-size="14.2" fill="#061a12" style="word-spacing:-1px;letter-spacing:-0.3px">Ch 8</text>
<text x="675.4" y="1035.6" font-size="13.4" fill="#111">2 V/div</text>
<text x="675.4" y="1055.4" font-size="13.5" fill="#111">1 MΩ</text>
<text x="675.4" y="1073.5" font-size="13.7" fill="#111">100 MHz</text>
<text x="741.3" y="1067.6" font-size="8.3" fill="#111">B</text>
<text x="746" y="1071.3" font-size="8.3" fill="#111">w</text>
<rect x="1119" y="998" width="1" height="79" fill="#555"/>
<rect x="1270" y="998" width="1" height="79" fill="#555"/>
<rect x="1130.5" y="998.5" width="39.3" height="78" rx="6" fill="url(#gb)" stroke="#6e665f" stroke-width="1"/>
<rect x="1134.5" y="1006" width="31.3" height="2" fill="#f59a23"/>
<text x="1150.15" y="1028.5" font-size="14.5" fill="#f4f4f4" text-anchor="middle">Add</text>
<text x="1150.15" y="1044.6" font-size="14.5" fill="#f4f4f4" text-anchor="middle">New</text>
<text x="1150.15" y="1060.5" font-size="14.5" fill="#f4f4f4" text-anchor="middle">Math</text>
<rect x="1175.5" y="998.5" width="39.3" height="78" rx="6" fill="url(#gb)" stroke="#6e665f" stroke-width="1"/>
<rect x="1179.5" y="1006" width="31.3" height="2" fill="#cfd0dc"/>
<text x="1195.15" y="1028.5" font-size="14.5" fill="#f4f4f4" text-anchor="middle">Add</text>
<text x="1195.15" y="1044.6" font-size="14.5" fill="#f4f4f4" text-anchor="middle">New</text>
<text x="1195.15" y="1060.5" font-size="14.5" fill="#f4f4f4" text-anchor="middle">Ref</text>
<rect x="1220.5" y="998.5" width="39.3" height="78" rx="6" fill="url(#gb)" stroke="#6e665f" stroke-width="1"/>
<rect x="1224.5" y="1006" width="31.3" height="2" fill="#c163f2"/>
<text x="1240.15" y="1028.5" font-size="14.5" fill="#f4f4f4" text-anchor="middle">Add</text>
<text x="1240.15" y="1044.6" font-size="14.5" fill="#f4f4f4" text-anchor="middle">New</text>
<text x="1240.15" y="1060.5" font-size="14.5" fill="#f4f4f4" text-anchor="middle">Bus</text>
<rect x="1281" y="998.5" width="200.3" height="78" rx="4" fill="#cbcbcb"/>
<path d="M1281 1016.5V1002.5Q1281 998.5 1285 998.5H1477.3Q1481.3 998.5 1481.3 1002.5V1016.5Z" fill="#58595b"/>
<rect x="1281" y="1016.5" width="200.3" height="2.5" fill="url(#gh)"/>
<text x="1286.5" y="1011.6" font-size="14.5" fill="#ececec">Horizontal</text>
<text x="1288" y="1034.4" font-size="13.3" fill="#111">5 ms/div</text>
<text x="1394.3" y="1034.4" font-size="13.3" fill="#111">50 ms</text>
<text x="1288" y="1053.2" font-size="13.3" fill="#111">SR: 250 MS/s</text>
<text x="1394.3" y="1053.2" font-size="13.3" fill="#111">4 ns/pt</text>
<text x="1288" y="1072.3" font-size="13.3" fill="#111">RL: 12.5 Mpts</text>
<text x="1409.3" y="1072.3" font-size="13.3" fill="#111">10%</text>
<path d="M1394.3 1063.2h8.2v8.6h-2.3l-1.8 2.8l-1.8-2.8h-2.3z" fill="#000" stroke="#f6921f" stroke-width="1.2"/>
<text x="1398.4" y="1070.2" font-size="6.5" fill="#fff" text-anchor="middle" font-weight="bold">T</text>
<rect x="1491" y="998.5" width="159.7" height="78" rx="4" fill="#cbcbcb"/>
<path d="M1491 1016.5V1002.5Q1491 998.5 1495 998.5H1646.7Q1650.7 998.5 1650.7 1002.5V1016.5Z" fill="#58595b"/>
<rect x="1491" y="1016.5" width="159.7" height="2.5" fill="url(#gh)"/>
<text x="1496.5" y="1011.6" font-size="14.5" fill="#ececec">Trigger</text>
<rect x="1498.5" y="1023" width="29" height="15.5" rx="5" fill="#00e2a0" stroke="#0a0a0a" stroke-width="1"/>
<text x="1513" y="1035.6" font-size="13.3" fill="#050505" text-anchor="middle">8</text>
<path d="M1538.5 1035H1542.5L1549.5 1025.2H1553.8" fill="none" stroke="#44448c" stroke-width="1"/>
<text x="1564" y="1034.4" font-size="13.3" fill="#111">4 V</text>
<rect x="1661" y="998.5" width="149.7" height="78" rx="4" fill="#cbcbcb"/>
<path d="M1661 1016.5V1002.5Q1661 998.5 1665 998.5H1806.7Q1810.7 998.5 1810.7 1002.5V1016.5Z" fill="#58595b"/>
<rect x="1661" y="1016.5" width="149.7" height="2.5" fill="url(#gh)"/>
<text x="1666.5" y="1011.6" font-size="14.5" fill="#ececec">Acquisition</text>
<text x="1668.3" y="1034.4" font-size="13.3" fill="#111">Manual,</text>
<text x="1746.5" y="1034.4" font-size="13.3" fill="#111">Analyze</text>
<text x="1668.3" y="1053.2" font-size="13.3" fill="#111">High Res: 15 bits</text>
<text x="1668.3" y="1072.3" font-size="13.3" fill="#111">Single: 1 /1</text>
<rect x="1821.5" y="998.7" width="89" height="34.6" rx="6" fill="#ff1f2b" stroke="#8a2a2e" stroke-width="1"/>
<text x="1866" y="1018.7" font-size="12.8" fill="#fff" text-anchor="middle" font-weight="bold" style="font-family:'Liberation Sans',sans-serif">Stopped</text>
<rect x="1821" y="1042.2" width="89.8" height="35.3" rx="4" fill="#cbcbcb"/>
<text x="1866" y="1056.6" font-size="13.4" fill="#111" text-anchor="middle">28 May 2025</text>
<text x="1866" y="1073.2" font-size="13.1" fill="#111" text-anchor="middle">18:20:34</text>
</svg>
</body></html>
